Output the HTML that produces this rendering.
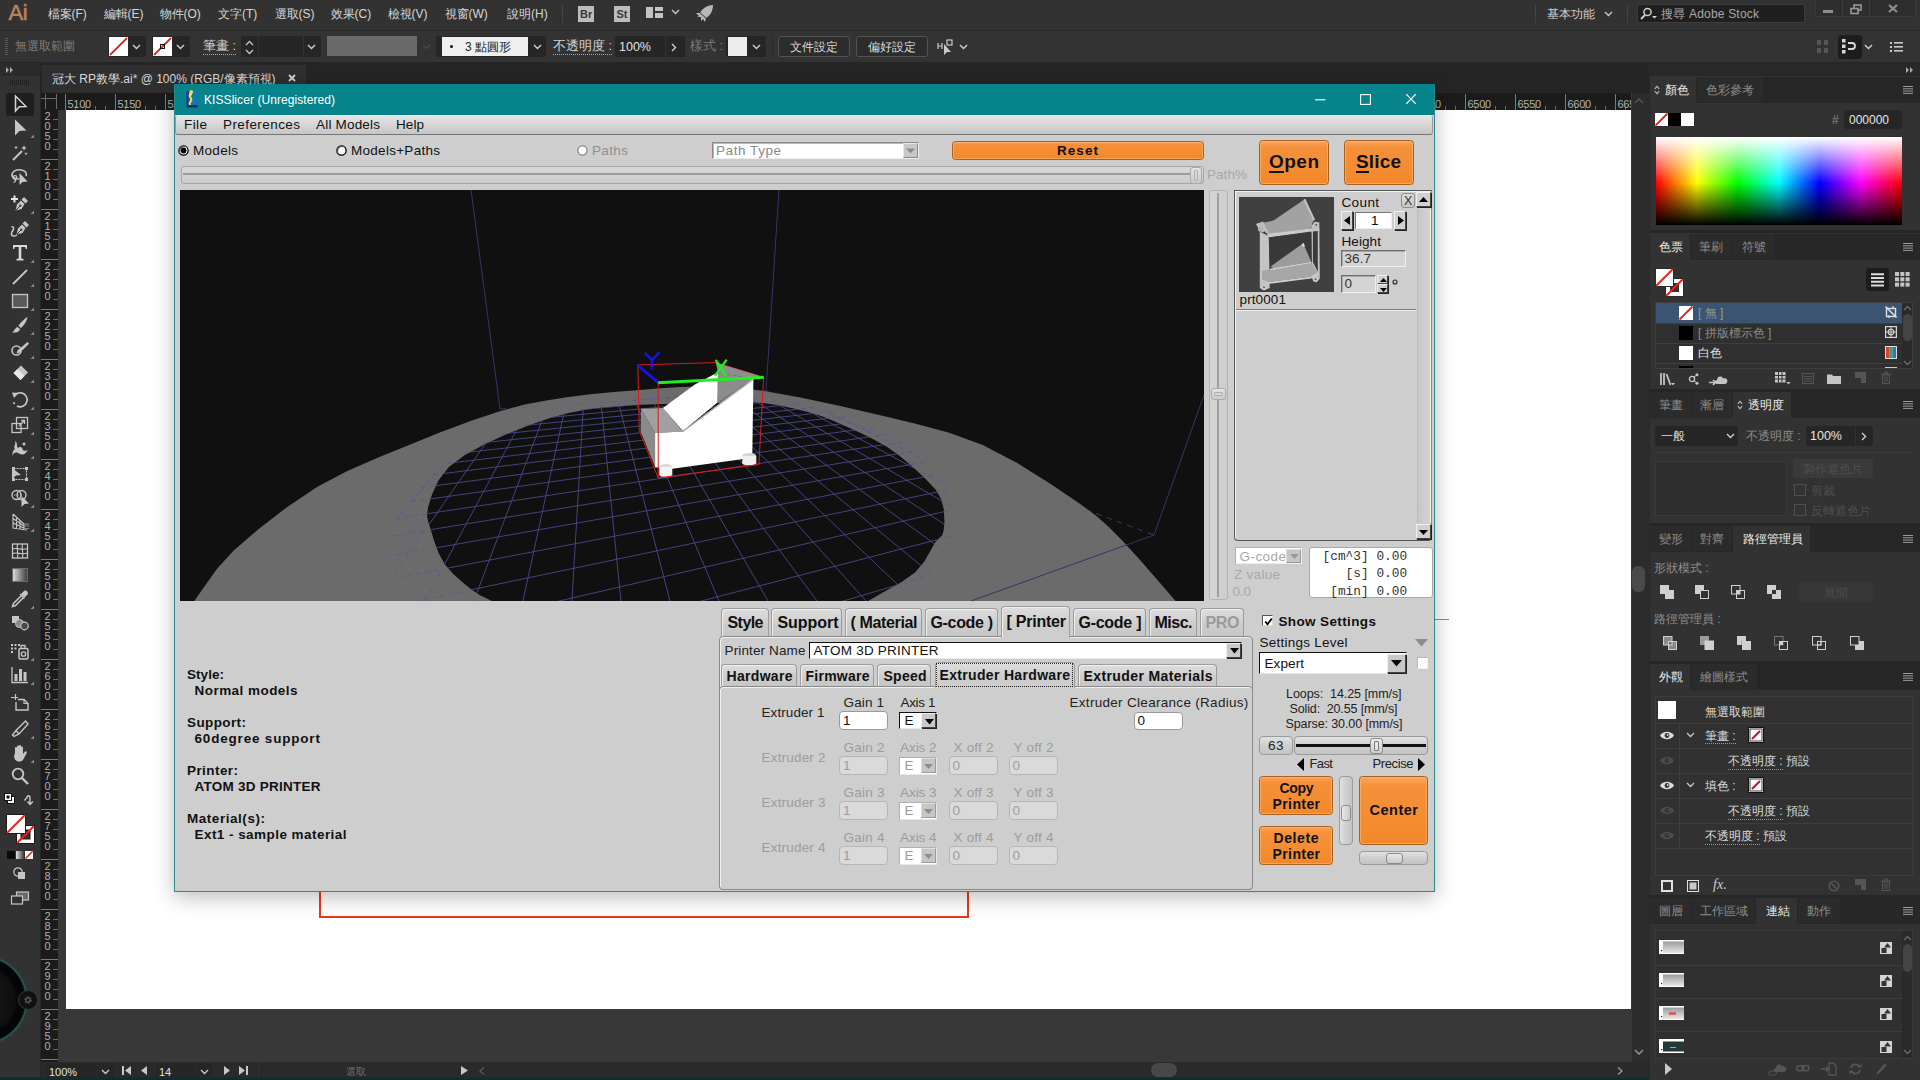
<!DOCTYPE html>
<html lang="zh-Hant">
<head>
<meta charset="utf-8">
<title>KISSlicer over Illustrator</title>
<style>
*{box-sizing:border-box;margin:0;padding:0}
html,body{width:1920px;height:1080px;overflow:hidden;background:#323232}
body{font-family:"Liberation Sans",sans-serif;font-size:12px;color:#d0d0d0;position:relative}
.a{position:absolute}
.t{position:absolute;white-space:nowrap;line-height:1}
svg{position:absolute;overflow:visible}
/* ---------- Illustrator chrome ---------- */
#menubar{left:0;top:0;width:1920px;height:29px;background:#323232}
#menubar .t{top:8px;font-size:12px;color:#d6d6d6}
#ctrlbar{left:0;top:30px;width:1920px;height:33px;background:#333333;border-top:1px solid #2a2a2a;border-bottom:1px solid #262626}
#tabstrip{left:0;top:63px;width:1920px;height:30px;background:#252525}
#doctab{left:42px;top:65px;width:264px;height:28px;background:#2f2f2f}
#tools{left:0;top:63px;width:41px;height:1017px;background:#323232;border-right:1px solid #262626}
#canvasbg{left:41px;top:93px;width:1608px;height:987px;background:#383838}
#hruler{left:58px;top:93px;width:1573px;height:17px;background:#1b1b1b;overflow:hidden}
#vruler{left:41px;top:93px;width:17px;height:972px;background:#1b1b1b;overflow:hidden}
#artboard{left:66px;top:110px;width:1564.5px;height:899px;background:#ffffff}
#statusbar{left:41px;top:1062px;width:1608px;height:18px;background:#2a2a2a}
#rightpanel{left:1649px;top:63px;width:271px;height:1017px;background:#323232}
.rt{font-size:10.5px;color:#c8c8c8;letter-spacing:0}
.rl{font-size:11px;color:#b0b0b0;letter-spacing:-0.25px}
/* ---------- KISSlicer ---------- */
#kiss{left:174px;top:85px;width:1261px;height:807px;background:#cecece;border:1px solid #2a8a8e;box-shadow:0 5px 20px rgba(0,0,0,.27)}
#kiss .t{color:#111}
</style>
</head>
<body>
<!-- ======= Illustrator top bars ======= -->
<div id="menubar" class="a">
  <div class="t" style="left:8.5px;top:1.5px;font-size:22px;color:#b5835c;letter-spacing:-0.5px;-webkit-text-stroke:0.6px #b5835c">Ai</div>
  <div class="t" style="left:47.5px">檔案(F)</div>
  <div class="t" style="left:103.5px">編輯(E)</div>
  <div class="t" style="left:159.5px">物件(O)</div>
  <div class="t" style="left:218px">文字(T)</div>
  <div class="t" style="left:274.5px">選取(S)</div>
  <div class="t" style="left:330.5px">效果(C)</div>
  <div class="t" style="left:387.5px">檢視(V)</div>
  <div class="t" style="left:444.5px">視窗(W)</div>
  <div class="t" style="left:507px">說明(H)</div>
  <div class="a" style="left:562px;top:5px;width:1px;height:18px;background:#444"></div>
  <div class="a" style="left:578px;top:6px;width:16px;height:16px;background:#bdbdbd"></div>
  <div class="t" style="left:580px;top:9px;font-size:11px;font-weight:bold;color:#3a3a3a">Br</div>
  <div class="a" style="left:614px;top:6px;width:16px;height:16px;background:#bdbdbd"></div>
  <div class="t" style="left:616.5px;top:9px;font-size:11px;font-weight:bold;color:#3a3a3a">St</div>
  <svg style="left:646px;top:7px" width="18" height="12"><rect x="0" y="0" width="7" height="11" fill="#c4c4c4"/><rect x="9" y="0" width="8" height="4" fill="#c4c4c4"/><rect x="9" y="6" width="8" height="5" fill="#c4c4c4"/></svg>
  <svg style="left:671px;top:9px" width="9" height="6"><path d="M1 1 L4.5 4.5 L8 1" fill="none" stroke="#c8c8c8" stroke-width="1.4"/></svg>
  <svg style="left:695px;top:4px" width="20" height="19"><path d="M18 1 C12 1 7 5 5 9 L1 9 L4 12 L2 13 L6 13 L6 17 L8 15 L10 18 L11 14 C15 12 18 7 18 1 Z" fill="#b8b8b8"/><path d="M5 9 L11 14" stroke="#323232" stroke-width="1"/></svg>
  <div class="a" style="left:1535px;top:5px;width:1px;height:18px;background:#444"></div>
  <div class="t" style="left:1547px;top:8px;font-size:12px;color:#cfcfcf">基本功能</div>
  <svg style="left:1604px;top:11px" width="9" height="6"><path d="M1 1 L4.5 4.5 L8 1" fill="none" stroke="#c8c8c8" stroke-width="1.4"/></svg>
  <div class="a" style="left:1627px;top:5px;width:1px;height:18px;background:#444"></div>
  <div class="a" style="left:1637px;top:4px;width:168px;height:19px;background:#1f1f1f;border:1px solid #3c3c3c;border-radius:2px"></div>
  <svg style="left:1640px;top:7px" width="18" height="13"><circle cx="7.5" cy="5" r="3.6" fill="none" stroke="#d0d0d0" stroke-width="1.5"/><path d="M5 8 L1 12" stroke="#d0d0d0" stroke-width="1.8"/><path d="M12 9 L17 9 L14.5 11.5 Z" fill="#d0d0d0"/></svg>
  <div class="t" style="left:1661px;top:8px;font-size:12px;color:#a9a9a9;letter-spacing:0.2px">搜尋 Adobe Stock</div>
  <div class="a" style="left:1815px;top:0;width:101px;height:17px;background:#2e2e2e;border:1px solid #3a3a3a;border-top:0;border-radius:0 0 2px 2px"></div>
  <div class="a" style="left:1842px;top:0;width:1px;height:16px;background:#3e3e3e"></div>
  <div class="a" style="left:1869px;top:0;width:1px;height:16px;background:#3e3e3e"></div>
  <div class="a" style="left:1823px;top:10px;width:10px;height:3px;background:#8f8f8f"></div>
  <svg style="left:1850px;top:4px" width="13" height="11"><rect x="4" y="1" width="7" height="5" fill="none" stroke="#9a9a9a" stroke-width="1.6"/><rect x="1" y="4.5" width="7" height="5" fill="#2e2e2e" stroke="#9a9a9a" stroke-width="1.6"/></svg>
  <svg style="left:1888px;top:4px" width="11" height="9"><path d="M1 1 L9 8 M9 1 L1 8" stroke="#8f8f8f" stroke-width="2.2"/></svg>
</div>
<div id="ctrlbar" class="a">
  <div class="a" style="left:5px;top:7px;width:3px;height:18px;background:repeating-linear-gradient(#555 0 1px,transparent 1px 2px)"></div>
  <div class="t" style="left:15px;top:9px;font-size:12px;color:#7d7d7d">無選取範圍</div>
  <!-- fill swatch -->
  <div class="a" style="left:108px;top:5px;width:38px;height:21px;background:#262626;border-radius:2px"></div>
  <svg style="left:109px;top:6px" width="19" height="19"><rect width="19" height="19" fill="#fff"/><path d="M1 18 L18 1" stroke="#e0261c" stroke-width="1.8"/></svg>
  <svg style="left:132px;top:13px" width="9" height="6"><path d="M1 1 L4.5 4.5 L8 1" fill="none" stroke="#d0d0d0" stroke-width="1.4"/></svg>
  <!-- stroke swatch -->
  <div class="a" style="left:152px;top:5px;width:38px;height:21px;background:#262626;border-radius:2px"></div>
  <svg style="left:153px;top:6px" width="19" height="19"><rect width="19" height="19" fill="#fff"/><path d="M1 18 L18 1" stroke="#e0261c" stroke-width="1.8"/><rect x="7.5" y="7.5" width="4" height="4" fill="none" stroke="#111" stroke-width="1"/></svg>
  <svg style="left:176px;top:13px" width="9" height="6"><path d="M1 1 L4.5 4.5 L8 1" fill="none" stroke="#d0d0d0" stroke-width="1.4"/></svg>
  <div class="t" style="left:203px;top:9px;font-size:12.5px;color:#d4d4d4;border-bottom:1px dotted #aaa;padding-bottom:1px">筆畫 :</div>
  <div class="a" style="left:241px;top:5px;width:80px;height:21px;background:#262626;border-radius:2px"></div>
  <div class="a" style="left:258px;top:5px;width:1px;height:21px;background:#323232"></div>
  <div class="a" style="left:303px;top:5px;width:1px;height:21px;background:#323232"></div>
  <svg style="left:245px;top:9px" width="9" height="15"><path d="M1 5 L4.5 1.5 L8 5 M1 10 L4.5 13.5 L8 10" fill="none" stroke="#c8c8c8" stroke-width="1.3"/></svg>
  <svg style="left:307px;top:13px" width="9" height="6"><path d="M1 1 L4.5 4.5 L8 1" fill="none" stroke="#d0d0d0" stroke-width="1.4"/></svg>
  <div class="a" style="left:327px;top:5px;width:90px;height:20px;background:#6a6a6a"></div>
  <svg style="left:422px;top:13px" width="9" height="6"><path d="M1 1 L4.5 4.5 L8 1" fill="none" stroke="#484848" stroke-width="1.4"/></svg>
  <div class="a" style="left:436px;top:5px;width:110px;height:21px;background:#262626;border-radius:2px"></div>
  <div class="a" style="left:442px;top:6px;width:86px;height:19px;background:#efefef"></div>
  <div class="a" style="left:450px;top:14px;width:3px;height:3px;border-radius:2px;background:#111"></div>
  <div class="t" style="left:465px;top:10px;font-size:12px;color:#222">3 點圓形</div>
  <svg style="left:533px;top:13px" width="9" height="6"><path d="M1 1 L4.5 4.5 L8 1" fill="none" stroke="#d0d0d0" stroke-width="1.4"/></svg>
  <div class="t" style="left:553px;top:9px;font-size:12.5px;color:#d4d4d4;border-bottom:1px dotted #aaa;padding-bottom:1px">不透明度 :</div>
  <div class="a" style="left:615px;top:5px;width:70px;height:21px;background:#262626;border-radius:2px"></div>
  <div class="a" style="left:665px;top:5px;width:1px;height:21px;background:#323232"></div>
  <div class="t" style="left:619px;top:10px;font-size:12.5px;color:#e0e0e0">100%</div>
  <svg style="left:671px;top:12px" width="6" height="9"><path d="M1 1 L4.5 4.5 L1 8" fill="none" stroke="#d0d0d0" stroke-width="1.4"/></svg>
  <div class="t" style="left:690px;top:9px;font-size:12.5px;color:#7d7d7d">樣式 :</div>
  <div class="a" style="left:726px;top:5px;width:40px;height:21px;background:#262626;border-radius:2px"></div>
  <div class="a" style="left:728px;top:6px;width:19px;height:19px;background:#ececec"></div>
  <svg style="left:752px;top:13px" width="9" height="6"><path d="M1 1 L4.5 4.5 L8 1" fill="none" stroke="#d0d0d0" stroke-width="1.4"/></svg>
  <div class="a" style="left:772px;top:4px;width:1px;height:24px;background:#2a2a2a"></div>
  <div class="a" style="left:778px;top:5px;width:72px;height:21px;background:#2c2c2c;border:1px solid #525252;border-radius:3px"></div>
  <div class="t" style="left:790px;top:10px;font-size:12px;color:#dadada">文件設定</div>
  <div class="a" style="left:856px;top:5px;width:72px;height:21px;background:#2c2c2c;border:1px solid #525252;border-radius:3px"></div>
  <div class="t" style="left:868px;top:10px;font-size:12px;color:#dadada">偏好設定</div>
  <svg style="left:937px;top:8px" width="18" height="17"><path d="M1 4 L1 10 M1 7 L5 7 M5 4 L5 10" stroke="#c8c8c8" stroke-width="1.2" fill="none"/><rect x="10" y="1" width="5" height="5" fill="none" stroke="#c8c8c8" stroke-width="1.2"/><path d="M7 5 L7 16 L10 13 L14 13 Z" fill="#c8c8c8"/></svg>
  <svg style="left:959px;top:13px" width="9" height="6"><path d="M1 1 L4.5 4.5 L8 1" fill="none" stroke="#d0d0d0" stroke-width="1.4"/></svg>
  <!-- right icons -->
  <svg style="left:1817px;top:9px" width="13" height="14"><g fill="#555"><rect x="0" y="0" width="4" height="5"/><rect x="7" y="0" width="4" height="5"/><rect x="0" y="8" width="4" height="5"/><rect x="7" y="8" width="4" height="5"/></g></svg>
  <div class="a" style="left:1838px;top:4px;width:24px;height:24px;background:#1d1d1d;border-radius:3px"></div>
  <svg style="left:1842px;top:8px" width="16" height="15"><g fill="#d8d8d8"><rect x="0" y="0" width="3.5" height="3.5"/><rect x="0" y="5.5" width="3.5" height="3.5"/><rect x="0" y="11" width="3.5" height="3.5"/></g><path d="M6 4 L10 4 C14 4 14 10 10 10 L6 10" fill="none" stroke="#d8d8d8" stroke-width="1.8"/></svg>
  <svg style="left:1864px;top:13px" width="9" height="6"><path d="M1 1 L4.5 4.5 L8 1" fill="none" stroke="#d0d0d0" stroke-width="1.4"/></svg>
  <svg style="left:1890px;top:11px" width="13" height="10"><g fill="#c8c8c8"><rect x="0" y="0" width="2" height="2"/><rect x="0" y="4" width="2" height="2"/><rect x="0" y="8" width="2" height="2"/><rect x="4" y="0" width="9" height="1.6"/><rect x="4" y="4" width="9" height="1.6"/><rect x="4" y="8" width="9" height="1.6"/></g></svg>
</div>
<div id="tabstrip" class="a"></div>
<div id="doctab" class="a">
  <div class="t" style="left:10px;top:8px;font-size:12px;color:#d8d8d8">冠大 RP教學.ai* @ 100% (RGB/像素預視)</div>
  <svg style="left:246px;top:9px" width="8" height="8"><path d="M1 1 L7 7 M7 1 L1 7" stroke="#d0d0d0" stroke-width="1.8"/></svg>
</div>
<!-- ======= canvas, rulers ======= -->
<div id="canvasbg" class="a"></div>
<div id="artboard" class="a"></div>
<div class="a" style="left:319px;top:880px;width:650px;height:38px;border:2px solid #e8391d;border-top:0"></div>
<div class="a" style="left:1435px;top:619px;width:14px;height:1px;background:#888"></div>
<div id="hruler" class="a">
<svg style="left:0;top:0" width="1574" height="17"><path d="M7.5 1 V17" stroke="#7a7a7a" stroke-width="1"/><path d="M17.5 13 V17" stroke="#6a6a6a" stroke-width="1"/><path d="M27.5 13 V17" stroke="#6a6a6a" stroke-width="1"/><path d="M37.5 13 V17" stroke="#6a6a6a" stroke-width="1"/><path d="M47.5 13 V17" stroke="#6a6a6a" stroke-width="1"/><path d="M57.5 1 V17" stroke="#7a7a7a" stroke-width="1"/><path d="M67.5 13 V17" stroke="#6a6a6a" stroke-width="1"/><path d="M77.5 13 V17" stroke="#6a6a6a" stroke-width="1"/><path d="M87.5 13 V17" stroke="#6a6a6a" stroke-width="1"/><path d="M97.5 13 V17" stroke="#6a6a6a" stroke-width="1"/><path d="M107.5 1 V17" stroke="#7a7a7a" stroke-width="1"/><path d="M117.5 13 V17" stroke="#6a6a6a" stroke-width="1"/><path d="M127.5 13 V17" stroke="#6a6a6a" stroke-width="1"/><path d="M137.5 13 V17" stroke="#6a6a6a" stroke-width="1"/><path d="M147.5 13 V17" stroke="#6a6a6a" stroke-width="1"/><path d="M157.5 1 V17" stroke="#7a7a7a" stroke-width="1"/><path d="M167.5 13 V17" stroke="#6a6a6a" stroke-width="1"/><path d="M177.5 13 V17" stroke="#6a6a6a" stroke-width="1"/><path d="M187.5 13 V17" stroke="#6a6a6a" stroke-width="1"/><path d="M197.5 13 V17" stroke="#6a6a6a" stroke-width="1"/><path d="M207.5 1 V17" stroke="#7a7a7a" stroke-width="1"/><path d="M217.5 13 V17" stroke="#6a6a6a" stroke-width="1"/><path d="M227.5 13 V17" stroke="#6a6a6a" stroke-width="1"/><path d="M237.5 13 V17" stroke="#6a6a6a" stroke-width="1"/><path d="M247.5 13 V17" stroke="#6a6a6a" stroke-width="1"/><path d="M257.5 1 V17" stroke="#7a7a7a" stroke-width="1"/><path d="M267.5 13 V17" stroke="#6a6a6a" stroke-width="1"/><path d="M277.5 13 V17" stroke="#6a6a6a" stroke-width="1"/><path d="M287.5 13 V17" stroke="#6a6a6a" stroke-width="1"/><path d="M297.5 13 V17" stroke="#6a6a6a" stroke-width="1"/><path d="M307.5 1 V17" stroke="#7a7a7a" stroke-width="1"/><path d="M317.5 13 V17" stroke="#6a6a6a" stroke-width="1"/><path d="M327.5 13 V17" stroke="#6a6a6a" stroke-width="1"/><path d="M337.5 13 V17" stroke="#6a6a6a" stroke-width="1"/><path d="M347.5 13 V17" stroke="#6a6a6a" stroke-width="1"/><path d="M357.5 1 V17" stroke="#7a7a7a" stroke-width="1"/><path d="M367.5 13 V17" stroke="#6a6a6a" stroke-width="1"/><path d="M377.5 13 V17" stroke="#6a6a6a" stroke-width="1"/><path d="M387.5 13 V17" stroke="#6a6a6a" stroke-width="1"/><path d="M397.5 13 V17" stroke="#6a6a6a" stroke-width="1"/><path d="M407.5 1 V17" stroke="#7a7a7a" stroke-width="1"/><path d="M417.5 13 V17" stroke="#6a6a6a" stroke-width="1"/><path d="M427.5 13 V17" stroke="#6a6a6a" stroke-width="1"/><path d="M437.5 13 V17" stroke="#6a6a6a" stroke-width="1"/><path d="M447.5 13 V17" stroke="#6a6a6a" stroke-width="1"/><path d="M457.5 1 V17" stroke="#7a7a7a" stroke-width="1"/><path d="M467.5 13 V17" stroke="#6a6a6a" stroke-width="1"/><path d="M477.5 13 V17" stroke="#6a6a6a" stroke-width="1"/><path d="M487.5 13 V17" stroke="#6a6a6a" stroke-width="1"/><path d="M497.5 13 V17" stroke="#6a6a6a" stroke-width="1"/><path d="M507.5 1 V17" stroke="#7a7a7a" stroke-width="1"/><path d="M517.5 13 V17" stroke="#6a6a6a" stroke-width="1"/><path d="M527.5 13 V17" stroke="#6a6a6a" stroke-width="1"/><path d="M537.5 13 V17" stroke="#6a6a6a" stroke-width="1"/><path d="M547.5 13 V17" stroke="#6a6a6a" stroke-width="1"/><path d="M557.5 1 V17" stroke="#7a7a7a" stroke-width="1"/><path d="M567.5 13 V17" stroke="#6a6a6a" stroke-width="1"/><path d="M577.5 13 V17" stroke="#6a6a6a" stroke-width="1"/><path d="M587.5 13 V17" stroke="#6a6a6a" stroke-width="1"/><path d="M597.5 13 V17" stroke="#6a6a6a" stroke-width="1"/><path d="M607.5 1 V17" stroke="#7a7a7a" stroke-width="1"/><path d="M617.5 13 V17" stroke="#6a6a6a" stroke-width="1"/><path d="M627.5 13 V17" stroke="#6a6a6a" stroke-width="1"/><path d="M637.5 13 V17" stroke="#6a6a6a" stroke-width="1"/><path d="M647.5 13 V17" stroke="#6a6a6a" stroke-width="1"/><path d="M657.5 1 V17" stroke="#7a7a7a" stroke-width="1"/><path d="M667.5 13 V17" stroke="#6a6a6a" stroke-width="1"/><path d="M677.5 13 V17" stroke="#6a6a6a" stroke-width="1"/><path d="M687.5 13 V17" stroke="#6a6a6a" stroke-width="1"/><path d="M697.5 13 V17" stroke="#6a6a6a" stroke-width="1"/><path d="M707.5 1 V17" stroke="#7a7a7a" stroke-width="1"/><path d="M717.5 13 V17" stroke="#6a6a6a" stroke-width="1"/><path d="M727.5 13 V17" stroke="#6a6a6a" stroke-width="1"/><path d="M737.5 13 V17" stroke="#6a6a6a" stroke-width="1"/><path d="M747.5 13 V17" stroke="#6a6a6a" stroke-width="1"/><path d="M757.5 1 V17" stroke="#7a7a7a" stroke-width="1"/><path d="M767.5 13 V17" stroke="#6a6a6a" stroke-width="1"/><path d="M777.5 13 V17" stroke="#6a6a6a" stroke-width="1"/><path d="M787.5 13 V17" stroke="#6a6a6a" stroke-width="1"/><path d="M797.5 13 V17" stroke="#6a6a6a" stroke-width="1"/><path d="M807.5 1 V17" stroke="#7a7a7a" stroke-width="1"/><path d="M817.5 13 V17" stroke="#6a6a6a" stroke-width="1"/><path d="M827.5 13 V17" stroke="#6a6a6a" stroke-width="1"/><path d="M837.5 13 V17" stroke="#6a6a6a" stroke-width="1"/><path d="M847.5 13 V17" stroke="#6a6a6a" stroke-width="1"/><path d="M857.5 1 V17" stroke="#7a7a7a" stroke-width="1"/><path d="M867.5 13 V17" stroke="#6a6a6a" stroke-width="1"/><path d="M877.5 13 V17" stroke="#6a6a6a" stroke-width="1"/><path d="M887.5 13 V17" stroke="#6a6a6a" stroke-width="1"/><path d="M897.5 13 V17" stroke="#6a6a6a" stroke-width="1"/><path d="M907.5 1 V17" stroke="#7a7a7a" stroke-width="1"/><path d="M917.5 13 V17" stroke="#6a6a6a" stroke-width="1"/><path d="M927.5 13 V17" stroke="#6a6a6a" stroke-width="1"/><path d="M937.5 13 V17" stroke="#6a6a6a" stroke-width="1"/><path d="M947.5 13 V17" stroke="#6a6a6a" stroke-width="1"/><path d="M957.5 1 V17" stroke="#7a7a7a" stroke-width="1"/><path d="M967.5 13 V17" stroke="#6a6a6a" stroke-width="1"/><path d="M977.5 13 V17" stroke="#6a6a6a" stroke-width="1"/><path d="M987.5 13 V17" stroke="#6a6a6a" stroke-width="1"/><path d="M997.5 13 V17" stroke="#6a6a6a" stroke-width="1"/><path d="M1007.5 1 V17" stroke="#7a7a7a" stroke-width="1"/><path d="M1017.5 13 V17" stroke="#6a6a6a" stroke-width="1"/><path d="M1027.5 13 V17" stroke="#6a6a6a" stroke-width="1"/><path d="M1037.5 13 V17" stroke="#6a6a6a" stroke-width="1"/><path d="M1047.5 13 V17" stroke="#6a6a6a" stroke-width="1"/><path d="M1057.5 1 V17" stroke="#7a7a7a" stroke-width="1"/><path d="M1067.5 13 V17" stroke="#6a6a6a" stroke-width="1"/><path d="M1077.5 13 V17" stroke="#6a6a6a" stroke-width="1"/><path d="M1087.5 13 V17" stroke="#6a6a6a" stroke-width="1"/><path d="M1097.5 13 V17" stroke="#6a6a6a" stroke-width="1"/><path d="M1107.5 1 V17" stroke="#7a7a7a" stroke-width="1"/><path d="M1117.5 13 V17" stroke="#6a6a6a" stroke-width="1"/><path d="M1127.5 13 V17" stroke="#6a6a6a" stroke-width="1"/><path d="M1137.5 13 V17" stroke="#6a6a6a" stroke-width="1"/><path d="M1147.5 13 V17" stroke="#6a6a6a" stroke-width="1"/><path d="M1157.5 1 V17" stroke="#7a7a7a" stroke-width="1"/><path d="M1167.5 13 V17" stroke="#6a6a6a" stroke-width="1"/><path d="M1177.5 13 V17" stroke="#6a6a6a" stroke-width="1"/><path d="M1187.5 13 V17" stroke="#6a6a6a" stroke-width="1"/><path d="M1197.5 13 V17" stroke="#6a6a6a" stroke-width="1"/><path d="M1207.5 1 V17" stroke="#7a7a7a" stroke-width="1"/><path d="M1217.5 13 V17" stroke="#6a6a6a" stroke-width="1"/><path d="M1227.5 13 V17" stroke="#6a6a6a" stroke-width="1"/><path d="M1237.5 13 V17" stroke="#6a6a6a" stroke-width="1"/><path d="M1247.5 13 V17" stroke="#6a6a6a" stroke-width="1"/><path d="M1257.5 1 V17" stroke="#7a7a7a" stroke-width="1"/><path d="M1267.5 13 V17" stroke="#6a6a6a" stroke-width="1"/><path d="M1277.5 13 V17" stroke="#6a6a6a" stroke-width="1"/><path d="M1287.5 13 V17" stroke="#6a6a6a" stroke-width="1"/><path d="M1297.5 13 V17" stroke="#6a6a6a" stroke-width="1"/><path d="M1307.5 1 V17" stroke="#7a7a7a" stroke-width="1"/><path d="M1317.5 13 V17" stroke="#6a6a6a" stroke-width="1"/><path d="M1327.5 13 V17" stroke="#6a6a6a" stroke-width="1"/><path d="M1337.5 13 V17" stroke="#6a6a6a" stroke-width="1"/><path d="M1347.5 13 V17" stroke="#6a6a6a" stroke-width="1"/><path d="M1357.5 1 V17" stroke="#7a7a7a" stroke-width="1"/><path d="M1367.5 13 V17" stroke="#6a6a6a" stroke-width="1"/><path d="M1377.5 13 V17" stroke="#6a6a6a" stroke-width="1"/><path d="M1387.5 13 V17" stroke="#6a6a6a" stroke-width="1"/><path d="M1397.5 13 V17" stroke="#6a6a6a" stroke-width="1"/><path d="M1407.5 1 V17" stroke="#7a7a7a" stroke-width="1"/><path d="M1417.5 13 V17" stroke="#6a6a6a" stroke-width="1"/><path d="M1427.5 13 V17" stroke="#6a6a6a" stroke-width="1"/><path d="M1437.5 13 V17" stroke="#6a6a6a" stroke-width="1"/><path d="M1447.5 13 V17" stroke="#6a6a6a" stroke-width="1"/><path d="M1457.5 1 V17" stroke="#7a7a7a" stroke-width="1"/><path d="M1467.5 13 V17" stroke="#6a6a6a" stroke-width="1"/><path d="M1477.5 13 V17" stroke="#6a6a6a" stroke-width="1"/><path d="M1487.5 13 V17" stroke="#6a6a6a" stroke-width="1"/><path d="M1497.5 13 V17" stroke="#6a6a6a" stroke-width="1"/><path d="M1507.5 1 V17" stroke="#7a7a7a" stroke-width="1"/><path d="M1517.5 13 V17" stroke="#6a6a6a" stroke-width="1"/><path d="M1527.5 13 V17" stroke="#6a6a6a" stroke-width="1"/><path d="M1537.5 13 V17" stroke="#6a6a6a" stroke-width="1"/><path d="M1547.5 13 V17" stroke="#6a6a6a" stroke-width="1"/><path d="M1557.5 1 V17" stroke="#7a7a7a" stroke-width="1"/><path d="M1567.5 13 V17" stroke="#6a6a6a" stroke-width="1"/></svg>
<div class="t rl" style="left:9.5px;top:5.5px">5100</div>
<div class="t rl" style="left:59.5px;top:5.5px">5150</div>
<div class="t rl" style="left:109.5px;top:5.5px">5200</div>
<div class="t rl" style="left:159.5px;top:5.5px">5250</div>
<div class="t rl" style="left:209.5px;top:5.5px">5300</div>
<div class="t rl" style="left:259.5px;top:5.5px">5350</div>
<div class="t rl" style="left:309.5px;top:5.5px">5400</div>
<div class="t rl" style="left:359.5px;top:5.5px">5450</div>
<div class="t rl" style="left:409.5px;top:5.5px">5500</div>
<div class="t rl" style="left:459.5px;top:5.5px">5550</div>
<div class="t rl" style="left:509.5px;top:5.5px">5600</div>
<div class="t rl" style="left:559.5px;top:5.5px">5650</div>
<div class="t rl" style="left:609.5px;top:5.5px">5700</div>
<div class="t rl" style="left:659.5px;top:5.5px">5750</div>
<div class="t rl" style="left:709.5px;top:5.5px">5800</div>
<div class="t rl" style="left:759.5px;top:5.5px">5850</div>
<div class="t rl" style="left:809.5px;top:5.5px">5900</div>
<div class="t rl" style="left:859.5px;top:5.5px">5950</div>
<div class="t rl" style="left:909.5px;top:5.5px">6000</div>
<div class="t rl" style="left:959.5px;top:5.5px">6050</div>
<div class="t rl" style="left:1009.5px;top:5.5px">6100</div>
<div class="t rl" style="left:1059.5px;top:5.5px">6150</div>
<div class="t rl" style="left:1109.5px;top:5.5px">6200</div>
<div class="t rl" style="left:1159.5px;top:5.5px">6250</div>
<div class="t rl" style="left:1209.5px;top:5.5px">6300</div>
<div class="t rl" style="left:1259.5px;top:5.5px">6350</div>
<div class="t rl" style="left:1309.5px;top:5.5px">6400</div>
<div class="t rl" style="left:1359.5px;top:5.5px">6450</div>
<div class="t rl" style="left:1409.5px;top:5.5px">6500</div>
<div class="t rl" style="left:1459.5px;top:5.5px">6550</div>
<div class="t rl" style="left:1509.5px;top:5.5px">6600</div>
<div class="t rl" style="left:1559.5px;top:5.5px">6650</div>
</div>
<div id="vruler" class="a">
<svg style="left:-1px;top:0" width="18" height="972"><path d="M1 16.5 H18" stroke="#7a7a7a" stroke-width="1"/><path d="M13 26.5 H18" stroke="#6a6a6a" stroke-width="1"/><path d="M13 36.5 H18" stroke="#6a6a6a" stroke-width="1"/><path d="M13 46.5 H18" stroke="#6a6a6a" stroke-width="1"/><path d="M13 56.5 H18" stroke="#6a6a6a" stroke-width="1"/><path d="M1 66.5 H18" stroke="#7a7a7a" stroke-width="1"/><path d="M13 76.5 H18" stroke="#6a6a6a" stroke-width="1"/><path d="M13 86.5 H18" stroke="#6a6a6a" stroke-width="1"/><path d="M13 96.5 H18" stroke="#6a6a6a" stroke-width="1"/><path d="M13 106.5 H18" stroke="#6a6a6a" stroke-width="1"/><path d="M1 116.5 H18" stroke="#7a7a7a" stroke-width="1"/><path d="M13 126.5 H18" stroke="#6a6a6a" stroke-width="1"/><path d="M13 136.5 H18" stroke="#6a6a6a" stroke-width="1"/><path d="M13 146.5 H18" stroke="#6a6a6a" stroke-width="1"/><path d="M13 156.5 H18" stroke="#6a6a6a" stroke-width="1"/><path d="M1 166.5 H18" stroke="#7a7a7a" stroke-width="1"/><path d="M13 176.5 H18" stroke="#6a6a6a" stroke-width="1"/><path d="M13 186.5 H18" stroke="#6a6a6a" stroke-width="1"/><path d="M13 196.5 H18" stroke="#6a6a6a" stroke-width="1"/><path d="M13 206.5 H18" stroke="#6a6a6a" stroke-width="1"/><path d="M1 216.5 H18" stroke="#7a7a7a" stroke-width="1"/><path d="M13 226.5 H18" stroke="#6a6a6a" stroke-width="1"/><path d="M13 236.5 H18" stroke="#6a6a6a" stroke-width="1"/><path d="M13 246.5 H18" stroke="#6a6a6a" stroke-width="1"/><path d="M13 256.5 H18" stroke="#6a6a6a" stroke-width="1"/><path d="M1 266.5 H18" stroke="#7a7a7a" stroke-width="1"/><path d="M13 276.5 H18" stroke="#6a6a6a" stroke-width="1"/><path d="M13 286.5 H18" stroke="#6a6a6a" stroke-width="1"/><path d="M13 296.5 H18" stroke="#6a6a6a" stroke-width="1"/><path d="M13 306.5 H18" stroke="#6a6a6a" stroke-width="1"/><path d="M1 316.5 H18" stroke="#7a7a7a" stroke-width="1"/><path d="M13 326.5 H18" stroke="#6a6a6a" stroke-width="1"/><path d="M13 336.5 H18" stroke="#6a6a6a" stroke-width="1"/><path d="M13 346.5 H18" stroke="#6a6a6a" stroke-width="1"/><path d="M13 356.5 H18" stroke="#6a6a6a" stroke-width="1"/><path d="M1 366.5 H18" stroke="#7a7a7a" stroke-width="1"/><path d="M13 376.5 H18" stroke="#6a6a6a" stroke-width="1"/><path d="M13 386.5 H18" stroke="#6a6a6a" stroke-width="1"/><path d="M13 396.5 H18" stroke="#6a6a6a" stroke-width="1"/><path d="M13 406.5 H18" stroke="#6a6a6a" stroke-width="1"/><path d="M1 416.5 H18" stroke="#7a7a7a" stroke-width="1"/><path d="M13 426.5 H18" stroke="#6a6a6a" stroke-width="1"/><path d="M13 436.5 H18" stroke="#6a6a6a" stroke-width="1"/><path d="M13 446.5 H18" stroke="#6a6a6a" stroke-width="1"/><path d="M13 456.5 H18" stroke="#6a6a6a" stroke-width="1"/><path d="M1 466.5 H18" stroke="#7a7a7a" stroke-width="1"/><path d="M13 476.5 H18" stroke="#6a6a6a" stroke-width="1"/><path d="M13 486.5 H18" stroke="#6a6a6a" stroke-width="1"/><path d="M13 496.5 H18" stroke="#6a6a6a" stroke-width="1"/><path d="M13 506.5 H18" stroke="#6a6a6a" stroke-width="1"/><path d="M1 516.5 H18" stroke="#7a7a7a" stroke-width="1"/><path d="M13 526.5 H18" stroke="#6a6a6a" stroke-width="1"/><path d="M13 536.5 H18" stroke="#6a6a6a" stroke-width="1"/><path d="M13 546.5 H18" stroke="#6a6a6a" stroke-width="1"/><path d="M13 556.5 H18" stroke="#6a6a6a" stroke-width="1"/><path d="M1 566.5 H18" stroke="#7a7a7a" stroke-width="1"/><path d="M13 576.5 H18" stroke="#6a6a6a" stroke-width="1"/><path d="M13 586.5 H18" stroke="#6a6a6a" stroke-width="1"/><path d="M13 596.5 H18" stroke="#6a6a6a" stroke-width="1"/><path d="M13 606.5 H18" stroke="#6a6a6a" stroke-width="1"/><path d="M1 616.5 H18" stroke="#7a7a7a" stroke-width="1"/><path d="M13 626.5 H18" stroke="#6a6a6a" stroke-width="1"/><path d="M13 636.5 H18" stroke="#6a6a6a" stroke-width="1"/><path d="M13 646.5 H18" stroke="#6a6a6a" stroke-width="1"/><path d="M13 656.5 H18" stroke="#6a6a6a" stroke-width="1"/><path d="M1 666.5 H18" stroke="#7a7a7a" stroke-width="1"/><path d="M13 676.5 H18" stroke="#6a6a6a" stroke-width="1"/><path d="M13 686.5 H18" stroke="#6a6a6a" stroke-width="1"/><path d="M13 696.5 H18" stroke="#6a6a6a" stroke-width="1"/><path d="M13 706.5 H18" stroke="#6a6a6a" stroke-width="1"/><path d="M1 716.5 H18" stroke="#7a7a7a" stroke-width="1"/><path d="M13 726.5 H18" stroke="#6a6a6a" stroke-width="1"/><path d="M13 736.5 H18" stroke="#6a6a6a" stroke-width="1"/><path d="M13 746.5 H18" stroke="#6a6a6a" stroke-width="1"/><path d="M13 756.5 H18" stroke="#6a6a6a" stroke-width="1"/><path d="M1 766.5 H18" stroke="#7a7a7a" stroke-width="1"/><path d="M13 776.5 H18" stroke="#6a6a6a" stroke-width="1"/><path d="M13 786.5 H18" stroke="#6a6a6a" stroke-width="1"/><path d="M13 796.5 H18" stroke="#6a6a6a" stroke-width="1"/><path d="M13 806.5 H18" stroke="#6a6a6a" stroke-width="1"/><path d="M1 816.5 H18" stroke="#7a7a7a" stroke-width="1"/><path d="M13 826.5 H18" stroke="#6a6a6a" stroke-width="1"/><path d="M13 836.5 H18" stroke="#6a6a6a" stroke-width="1"/><path d="M13 846.5 H18" stroke="#6a6a6a" stroke-width="1"/><path d="M13 856.5 H18" stroke="#6a6a6a" stroke-width="1"/><path d="M1 866.5 H18" stroke="#7a7a7a" stroke-width="1"/><path d="M13 876.5 H18" stroke="#6a6a6a" stroke-width="1"/><path d="M13 886.5 H18" stroke="#6a6a6a" stroke-width="1"/><path d="M13 896.5 H18" stroke="#6a6a6a" stroke-width="1"/><path d="M13 906.5 H18" stroke="#6a6a6a" stroke-width="1"/><path d="M1 916.5 H18" stroke="#7a7a7a" stroke-width="1"/><path d="M13 926.5 H18" stroke="#6a6a6a" stroke-width="1"/><path d="M13 936.5 H18" stroke="#6a6a6a" stroke-width="1"/><path d="M13 946.5 H18" stroke="#6a6a6a" stroke-width="1"/><path d="M13 956.5 H18" stroke="#6a6a6a" stroke-width="1"/><path d="M1 966.5 H18" stroke="#7a7a7a" stroke-width="1"/></svg>
<div class="t rl" style="left:2.5px;top:18px;width:8px;text-align:center">2</div>
<div class="t rl" style="left:2.5px;top:28px;width:8px;text-align:center">0</div>
<div class="t rl" style="left:2.5px;top:38px;width:8px;text-align:center">5</div>
<div class="t rl" style="left:2.5px;top:48px;width:8px;text-align:center">0</div>
<div class="t rl" style="left:2.5px;top:68px;width:8px;text-align:center">2</div>
<div class="t rl" style="left:2.5px;top:78px;width:8px;text-align:center">1</div>
<div class="t rl" style="left:2.5px;top:88px;width:8px;text-align:center">0</div>
<div class="t rl" style="left:2.5px;top:98px;width:8px;text-align:center">0</div>
<div class="t rl" style="left:2.5px;top:118px;width:8px;text-align:center">2</div>
<div class="t rl" style="left:2.5px;top:128px;width:8px;text-align:center">1</div>
<div class="t rl" style="left:2.5px;top:138px;width:8px;text-align:center">5</div>
<div class="t rl" style="left:2.5px;top:148px;width:8px;text-align:center">0</div>
<div class="t rl" style="left:2.5px;top:168px;width:8px;text-align:center">2</div>
<div class="t rl" style="left:2.5px;top:178px;width:8px;text-align:center">2</div>
<div class="t rl" style="left:2.5px;top:188px;width:8px;text-align:center">0</div>
<div class="t rl" style="left:2.5px;top:198px;width:8px;text-align:center">0</div>
<div class="t rl" style="left:2.5px;top:218px;width:8px;text-align:center">2</div>
<div class="t rl" style="left:2.5px;top:228px;width:8px;text-align:center">2</div>
<div class="t rl" style="left:2.5px;top:238px;width:8px;text-align:center">5</div>
<div class="t rl" style="left:2.5px;top:248px;width:8px;text-align:center">0</div>
<div class="t rl" style="left:2.5px;top:268px;width:8px;text-align:center">2</div>
<div class="t rl" style="left:2.5px;top:278px;width:8px;text-align:center">3</div>
<div class="t rl" style="left:2.5px;top:288px;width:8px;text-align:center">0</div>
<div class="t rl" style="left:2.5px;top:298px;width:8px;text-align:center">0</div>
<div class="t rl" style="left:2.5px;top:318px;width:8px;text-align:center">2</div>
<div class="t rl" style="left:2.5px;top:328px;width:8px;text-align:center">3</div>
<div class="t rl" style="left:2.5px;top:338px;width:8px;text-align:center">5</div>
<div class="t rl" style="left:2.5px;top:348px;width:8px;text-align:center">0</div>
<div class="t rl" style="left:2.5px;top:368px;width:8px;text-align:center">2</div>
<div class="t rl" style="left:2.5px;top:378px;width:8px;text-align:center">4</div>
<div class="t rl" style="left:2.5px;top:388px;width:8px;text-align:center">0</div>
<div class="t rl" style="left:2.5px;top:398px;width:8px;text-align:center">0</div>
<div class="t rl" style="left:2.5px;top:418px;width:8px;text-align:center">2</div>
<div class="t rl" style="left:2.5px;top:428px;width:8px;text-align:center">4</div>
<div class="t rl" style="left:2.5px;top:438px;width:8px;text-align:center">5</div>
<div class="t rl" style="left:2.5px;top:448px;width:8px;text-align:center">0</div>
<div class="t rl" style="left:2.5px;top:468px;width:8px;text-align:center">2</div>
<div class="t rl" style="left:2.5px;top:478px;width:8px;text-align:center">5</div>
<div class="t rl" style="left:2.5px;top:488px;width:8px;text-align:center">0</div>
<div class="t rl" style="left:2.5px;top:498px;width:8px;text-align:center">0</div>
<div class="t rl" style="left:2.5px;top:518px;width:8px;text-align:center">2</div>
<div class="t rl" style="left:2.5px;top:528px;width:8px;text-align:center">5</div>
<div class="t rl" style="left:2.5px;top:538px;width:8px;text-align:center">5</div>
<div class="t rl" style="left:2.5px;top:548px;width:8px;text-align:center">0</div>
<div class="t rl" style="left:2.5px;top:568px;width:8px;text-align:center">2</div>
<div class="t rl" style="left:2.5px;top:578px;width:8px;text-align:center">6</div>
<div class="t rl" style="left:2.5px;top:588px;width:8px;text-align:center">0</div>
<div class="t rl" style="left:2.5px;top:598px;width:8px;text-align:center">0</div>
<div class="t rl" style="left:2.5px;top:618px;width:8px;text-align:center">2</div>
<div class="t rl" style="left:2.5px;top:628px;width:8px;text-align:center">6</div>
<div class="t rl" style="left:2.5px;top:638px;width:8px;text-align:center">5</div>
<div class="t rl" style="left:2.5px;top:648px;width:8px;text-align:center">0</div>
<div class="t rl" style="left:2.5px;top:668px;width:8px;text-align:center">2</div>
<div class="t rl" style="left:2.5px;top:678px;width:8px;text-align:center">7</div>
<div class="t rl" style="left:2.5px;top:688px;width:8px;text-align:center">0</div>
<div class="t rl" style="left:2.5px;top:698px;width:8px;text-align:center">0</div>
<div class="t rl" style="left:2.5px;top:718px;width:8px;text-align:center">2</div>
<div class="t rl" style="left:2.5px;top:728px;width:8px;text-align:center">7</div>
<div class="t rl" style="left:2.5px;top:738px;width:8px;text-align:center">5</div>
<div class="t rl" style="left:2.5px;top:748px;width:8px;text-align:center">0</div>
<div class="t rl" style="left:2.5px;top:768px;width:8px;text-align:center">2</div>
<div class="t rl" style="left:2.5px;top:778px;width:8px;text-align:center">8</div>
<div class="t rl" style="left:2.5px;top:788px;width:8px;text-align:center">0</div>
<div class="t rl" style="left:2.5px;top:798px;width:8px;text-align:center">0</div>
<div class="t rl" style="left:2.5px;top:818px;width:8px;text-align:center">2</div>
<div class="t rl" style="left:2.5px;top:828px;width:8px;text-align:center">8</div>
<div class="t rl" style="left:2.5px;top:838px;width:8px;text-align:center">5</div>
<div class="t rl" style="left:2.5px;top:848px;width:8px;text-align:center">0</div>
<div class="t rl" style="left:2.5px;top:868px;width:8px;text-align:center">2</div>
<div class="t rl" style="left:2.5px;top:878px;width:8px;text-align:center">9</div>
<div class="t rl" style="left:2.5px;top:888px;width:8px;text-align:center">0</div>
<div class="t rl" style="left:2.5px;top:898px;width:8px;text-align:center">0</div>
<div class="t rl" style="left:2.5px;top:918px;width:8px;text-align:center">2</div>
<div class="t rl" style="left:2.5px;top:928px;width:8px;text-align:center">9</div>
<div class="t rl" style="left:2.5px;top:938px;width:8px;text-align:center">5</div>
<div class="t rl" style="left:2.5px;top:948px;width:8px;text-align:center">0</div>
</div>
<div class="a" style="left:41px;top:93px;width:17px;height:17px;background:#1b1b1b"></div>
<svg style="left:41px;top:94px" width="16" height="15"><path d="M4.5 0 V15 M0 4.5 H16 M15.5 0 V15" stroke="#6c6c6c" stroke-width="1" fill="none"/></svg>
<div class="a" style="left:1632px;top:93px;width:17px;height:969px;background:#2c2c2c"></div>
<svg style="left:1634px;top:98px" width="10" height="6"><path d="M1 5 L5 1 L9 5" fill="none" stroke="#555" stroke-width="1.4"/></svg>
<svg style="left:1634px;top:1049px" width="10" height="6"><path d="M1 1 L5 5 L9 1" fill="none" stroke="#9a9a9a" stroke-width="1.4"/></svg>
<div class="a" style="left:1632px;top:566px;width:13px;height:26px;border-radius:6px;background:#4a4a4a"></div>
<!-- ======= tools panel ======= -->
<div id="tools" class="a">
<div class="a" style="left:0;top:0;width:40px;height:13px;background:#2b2b2b"></div>
<svg style="left:6px;top:4px" width="8" height="6"><path d="M0 0 L3 3 L0 6 Z M4 0 L7 3 L4 6 Z" fill="#aaa"/></svg>
<div class="a" style="left:10px;top:17px;width:20px;height:5px;background:repeating-linear-gradient(90deg,#222 0 1px,transparent 1px 2px)"></div>
<svg style="left:0;top:0" width="41" height="1017"><rect x="6" y="30" width="28" height="23" rx="3" fill="#1e1e1e"/><g transform="translate(10,31)"><path d="M5.5 2 L5.5 17 L9.3 12.8 L16 12.5 Z" fill="none" stroke="#d4d4d4" stroke-width="1.5" stroke-linejoin="miter"/></g><g transform="translate(10,55)"><path d="M5 1.5 L5 17.5 L9.5 13 L16.5 12.5 Z" fill="#c6c6c6"/><path d="M24 20 L24 16.5 L20.5 20 Z" fill="#8a8a8a"/></g><g transform="translate(10,80)"><path d="M3 17 L12 8" stroke="#c6c6c6" stroke-width="2"/><path d="M14 2 L14.8 4.2 L17 5 L14.8 5.8 L14 8 L13.2 5.8 L11 5 L13.2 4.2 Z M6 2.5 L6.6 4 L8 4.5 L6.6 5 L6 6.5 L5.4 5 L4 4.5 L5.4 4 Z M16 9 L16.5 10.2 L17.8 10.7 L16.5 11.2 L16 12.5 L15.5 11.2 L14.2 10.7 L15.5 10.2 Z" fill="#c6c6c6"/></g><g transform="translate(10,104)"><path d="M9 12 C3 12 1 9 2.5 6 C4 3 9 2 13 3.5 C16 4.5 17 7 16 9" fill="none" stroke="#c6c6c6" stroke-width="1.6"/><circle cx="5" cy="10.5" r="1.8" fill="none" stroke="#c6c6c6" stroke-width="1.3"/><path d="M5.5 12 C6 14 5 15 3.5 15.5" fill="none" stroke="#c6c6c6" stroke-width="1.3"/><path d="M9.5 6 L9.5 18 L12.5 15 L17.5 14.5 Z" fill="#c6c6c6"/></g><g transform="translate(10,131)"><path d="M1 5 H8 M4.5 1.5 V8.5" stroke="#e6e6e6" stroke-width="2"/><path d="M14 3 L18 7 L15.5 9.5 L11.5 5.5 Z" fill="#c6c6c6"/><path d="M11 6.5 L14.5 10 L11.5 15 L5.5 16.5 L7 10.5 Z" fill="#c6c6c6"/><path d="M6 16 L10 12" stroke="#323232" stroke-width="1"/><circle cx="10.3" cy="11.7" r="1.1" fill="#323232"/><path d="M24 20 L24 16.5 L20.5 20 Z" fill="#8a8a8a"/></g><g transform="translate(10,156)"><path d="M15 2 L19 6 L16.5 8.5 L12.5 4.5 Z" fill="#c6c6c6"/><path d="M12 5.5 L15.5 9 L12.5 14 L6.5 15.5 L8 9.5 Z" fill="#c6c6c6"/><path d="M7 15 L11 11" stroke="#323232" stroke-width="1"/><circle cx="11.3" cy="10.7" r="1.1" fill="#323232"/><path d="M7 16 C4 18 1 17 1.5 14 C2 11 4 12 3.5 9 C3.2 7.5 2 7.5 1.5 8" fill="none" stroke="#c6c6c6" stroke-width="1.5"/></g><g transform="translate(10,180)"><path d="M3 2 H17 V6 H15.8 L15.2 4 H11.3 V15.5 L13.5 16 V17.5 H6.5 V16 L8.7 15.5 V4 H4.8 L4.2 6 H3 Z" fill="#d8d8d8"/><path d="M24 20 L24 16.5 L20.5 20 Z" fill="#8a8a8a"/></g><g transform="translate(10,204)"><path d="M3 17 L17 3" stroke="#c6c6c6" stroke-width="1.8"/><path d="M24 20 L24 16.5 L20.5 20 Z" fill="#8a8a8a"/></g><g transform="translate(10,228)"><rect x="2.5" y="3.5" width="15" height="13" fill="#5a5a5a" stroke="#c6c6c6" stroke-width="1.3"/><path d="M24 20 L24 16.5 L20.5 20 Z" fill="#8a8a8a"/></g><g transform="translate(10,252)"><path d="M17.5 2 C14 4 10 8 8.5 11 L11 13 C13.5 11 17 6 17.5 2 Z" fill="#c6c6c6"/><path d="M7.5 12 L10 14 C9.5 17 6 18 2 17.5 C4.5 16.5 4.5 13 7.5 12 Z" fill="#c6c6c6"/><path d="M24 20 L24 16.5 L20.5 20 Z" fill="#8a8a8a"/></g><g transform="translate(10,276)"><circle cx="6.5" cy="11.5" r="4.5" fill="none" stroke="#c6c6c6" stroke-width="1.6"/><path d="M17.5 3 L19 4.8 L10 13.5 L6.5 14.5 L7.5 11.5 Z" fill="#c6c6c6"/><path d="M24 20 L24 16.5 L20.5 20 Z" fill="#8a8a8a"/></g><g transform="translate(10,300)"><path d="M11 2.5 L18 9.5 L10.5 17 L3.5 10 Z" fill="#c6c6c6"/><path d="M3.5 10 L7.5 6 L14.5 13 L10.5 17 Z" fill="#e8e8e8"/><path d="M24 20 L24 16.5 L20.5 20 Z" fill="#8a8a8a"/></g><g transform="translate(10,327)"><path d="M5.5 4.5 A7 7 0 1 1 3.5 12" fill="none" stroke="#c6c6c6" stroke-width="1.7" stroke-dasharray="30 3 2 3 2 3 2 3"/><path d="M2 2.5 L8.5 3 L4 8 Z" fill="#c6c6c6"/><path d="M24 20 L24 16.5 L20.5 20 Z" fill="#8a8a8a"/></g><g transform="translate(10,352)"><rect x="2" y="8.5" width="9" height="9" fill="none" stroke="#c6c6c6" stroke-width="1.3"/><rect x="6.5" y="2.5" width="11" height="11" fill="none" stroke="#c6c6c6" stroke-width="1.3"/><path d="M9 11 L14.5 5.5 M11 5.5 H14.5 V9" fill="none" stroke="#c6c6c6" stroke-width="1.3"/><path d="M24 20 L24 16.5 L20.5 20 Z" fill="#8a8a8a"/></g><g transform="translate(10,376)"><path d="M2 17 C4 13 7 13 9 14.5 C12 16.5 15 16 18 11 C15 12.5 13 12 12.5 10 C12 7.5 9 7.5 8 9 C6 7 8 3 5 2 C6.5 5 3 7 5 10 C3 11 2.5 14 2 17 Z" fill="#c6c6c6"/><circle cx="14" cy="5" r="1.5" fill="#c6c6c6"/><path d="M24 20 L24 16.5 L20.5 20 Z" fill="#8a8a8a"/></g><g transform="translate(10,401)"><rect x="3.5" y="4.5" width="13" height="11" fill="none" stroke="#c6c6c6" stroke-width="1.1" stroke-dasharray="2 1"/><g fill="#c6c6c6"><rect x="2" y="3" width="3" height="3"/><rect x="15" y="3" width="3" height="3"/><rect x="2" y="14" width="3" height="3"/><rect x="15" y="14" width="3" height="3"/></g><path d="M2 4 L2 15 L6 11.5 L11 11 Z" fill="#c6c6c6"/></g><g transform="translate(10,425)"><circle cx="6.5" cy="7" r="4.5" fill="none" stroke="#c6c6c6" stroke-width="1.4"/><circle cx="11.5" cy="7" r="4.5" fill="none" stroke="#c6c6c6" stroke-width="1.4"/><path d="M4 7 H12" stroke="#c6c6c6" stroke-width="1" stroke-dasharray="1.5 1.5"/><path d="M11.5 8 L11.5 19 L14.5 16 L19 15.5 Z" fill="#c6c6c6"/><path d="M24 20 L24 16.5 L20.5 20 Z" fill="#8a8a8a"/></g><g transform="translate(10,449)"><path d="M3 2 V16 L17 18 M3 2 L14 12 V17.5 M3 6.5 L14 14 M3 11 L14 16 M6.5 5 V16.5 M10 8.5 V17" fill="none" stroke="#c6c6c6" stroke-width="1.1"/><path d="M14 14 H19 M14 16.5 H19 M14 12 H19" stroke="#8a8a8a" stroke-width="1"/><path d="M24 20 L24 16.5 L20.5 20 Z" fill="#8a8a8a"/></g><g transform="translate(10,478)"><rect x="2.5" y="3" width="15" height="14" fill="none" stroke="#c6c6c6" stroke-width="1.3"/><path d="M2.5 8 C7 6 12 10 17.5 7.5 M2.5 12.5 C7 10.5 12 14.5 17.5 12 M7.5 3 C6 8 9 12 7.5 17 M12.5 3 C11 8 14 12 12.5 17" fill="none" stroke="#c6c6c6" stroke-width="1.1"/></g><defs><linearGradient id="tg" x1="0" x2="1"><stop offset="0" stop-color="#e0e0e0"/><stop offset="1" stop-color="#3a3a3a"/></linearGradient></defs><g transform="translate(10,502)"><rect x="2.5" y="3.5" width="15" height="13" fill="url(#tg)" stroke="#6a6a6a" stroke-width="1"/></g><g transform="translate(10,526)"><path d="M14 2 C16 0.5 19 3.5 17.5 5.5 L14.5 8.5 L11 5 Z" fill="#c6c6c6"/><path d="M10 5 L14.5 9.5 M11 7 L3.5 14.5 L2.5 17.5 L5.5 16.5 L13 9" fill="none" stroke="#c6c6c6" stroke-width="1.5"/><path d="M24 20 L24 16.5 L20.5 20 Z" fill="#8a8a8a"/></g><g transform="translate(10,550)"><rect x="2" y="3" width="7" height="7" fill="#c6c6c6"/><circle cx="9.5" cy="10.5" r="4" fill="#8a8a8a" stroke="#c6c6c6" stroke-width="1"/><circle cx="14.5" cy="13" r="3.8" fill="#4a4a4a" stroke="#c6c6c6" stroke-width="1.2"/></g><g transform="translate(10,578)"><g fill="#c6c6c6"><rect x="1" y="3" width="2" height="2"/><rect x="4.5" y="3" width="2" height="2"/><rect x="8" y="3" width="2" height="2"/><rect x="1" y="6.5" width="2" height="2"/><rect x="4.5" y="6.5" width="2" height="2"/><rect x="1" y="10" width="2" height="2"/></g><rect x="9" y="7.5" width="9" height="10.5" rx="1.5" fill="none" stroke="#c6c6c6" stroke-width="1.5"/><circle cx="13.5" cy="13" r="2.2" fill="none" stroke="#c6c6c6" stroke-width="1.3"/><path d="M11 7 V4.5 H15 V7" fill="none" stroke="#c6c6c6" stroke-width="1.3"/><path d="M24 20 L24 16.5 L20.5 20 Z" fill="#8a8a8a"/></g><g transform="translate(10,602)"><path d="M2 2 V17.5 H18" fill="none" stroke="#c6c6c6" stroke-width="1.3"/><g fill="#c6c6c6"><rect x="4.5" y="9" width="3" height="7"/><rect x="9" y="4" width="3" height="12"/><rect x="13.5" y="7" width="3" height="9"/></g><path d="M24 20 L24 16.5 L20.5 20 Z" fill="#8a8a8a"/></g><g transform="translate(10,630)"><path d="M5.5 1 V7 M1 4.5 H8" stroke="#c6c6c6" stroke-width="1.2"/><path d="M8 6.5 H14 L18 10.5 V17 H6 V9" fill="none" stroke="#c6c6c6" stroke-width="1.4"/><path d="M14 6.5 V10.5 H18" fill="none" stroke="#c6c6c6" stroke-width="1.1"/></g><g transform="translate(10,656)"><path d="M15.5 2 L18 5 L9 15 L4 17.5 L2.5 16 L6 11.5 Z" fill="none" stroke="#c6c6c6" stroke-width="1.4"/><path d="M6 11.5 L9 15" stroke="#c6c6c6" stroke-width="1.2"/><path d="M24 20 L24 16.5 L20.5 20 Z" fill="#8a8a8a"/></g><g transform="translate(10,680)"><path d="M5 10 V5 C5 3.5 7 3.5 7 5 V9 V3.5 C7 2 9 2 9 3.5 V9 V3 C9 1.5 11 1.5 11 3 V9 V4.5 C11 3 13 3 13 4.5 V11 L14.5 9 C15.5 7.5 17.5 8.5 16.5 10.5 L13.5 16 C12.5 18 11 18.5 9 18.5 C6 18.5 4 16 4 13 Z" fill="#c6c6c6"/><path d="M24 20 L24 16.5 L20.5 20 Z" fill="#8a8a8a"/></g><g transform="translate(10,703)"><circle cx="8" cy="8" r="5.3" fill="none" stroke="#c6c6c6" stroke-width="1.8"/><path d="M12 12 L18 18" stroke="#c6c6c6" stroke-width="2.4"/></g><g transform="translate(10,728)"><rect x="-2.5" y="5.5" width="7" height="7" fill="#fff" stroke="#111" stroke-width="1"/><rect x="-5.5" y="2.5" width="7" height="7" fill="#fff" stroke="#111" stroke-width="1"/><rect x="-3.5" y="4.5" width="3" height="3" fill="#111"/><path d="M17 7 C17 4 20 4 20 7 L20 13 M14.5 9.5 L17 6.5 M23 10.5 L20 13.5 L17.5 10.5" fill="none" stroke="#c6c6c6" stroke-width="1.4"/></g><g transform="translate(0,-63)"><rect x="16.5" y="825.5" width="18" height="18" fill="#fff" stroke="#1a1a1a"/><rect x="21" y="830" width="9" height="9" fill="#323232" stroke="#1a1a1a"/><path d="M17 843 L34 826" stroke="#e0261c" stroke-width="2"/><rect x="6.5" y="814.5" width="19" height="19" fill="#fff" stroke="#1a1a1a"/><path d="M7 833 L25 815" stroke="#e0261c" stroke-width="2"/></g><g transform="translate(0,-63)"><rect x="7" y="851" width="8" height="8" fill="#0a0a0a"/><rect x="16" y="851" width="8" height="8" fill="url(#tg)"/><rect x="25" y="851" width="8" height="8" fill="#fff"/><path d="M25.5 858.5 L32.5 851.5" stroke="#e0261c" stroke-width="1.6"/></g><g transform="translate(10,801)"><circle cx="8" cy="8" r="4.2" fill="none" stroke="#c6c6c6" stroke-width="1.2"/><rect x="8" y="8" width="7" height="7" fill="#c6c6c6"/></g><g transform="translate(10,825)"><rect x="6.500" y="4" width="12" height="8" fill="#6a6a6a" stroke="#c6c6c6" stroke-width="1.2"/><rect x="1.5" y="8" width="11" height="8" fill="#323232" stroke="#c6c6c6" stroke-width="1.2"/></g></svg>
</div>
<!-- dial widget -->
<div class="a" style="left:-62px;top:955px;width:90px;height:90px;border-radius:50%;background:radial-gradient(circle closest-side at 50% 50%,#1a1a1a 0,#0f0f0f 70%,#050505 78%,#060606 93%,#1f5552 96%,#2a4a48 100%)"></div>
<div class="a" style="left:18px;top:990px;width:20px;height:20px;border-radius:50%;background:#101010;border:1px solid #3a3a3a"></div>
<svg style="left:23px;top:995px" width="10" height="10"><circle cx="5" cy="5" r="2.6" fill="none" stroke="#5a5a5a" stroke-width="2.2" stroke-dasharray="1.6 1.1"/><circle cx="5" cy="5" r="2.2" fill="none" stroke="#5a5a5a" stroke-width="1"/></svg>
<!-- ======= status bar ======= -->
<div id="statusbar" class="a">
  <div class="a" style="left:5px;top:1px;width:51px;height:16px;background:#262626"></div>
  <div class="t" style="left:8px;top:5px;font-size:11px;color:#e0e0e0">100%</div>
  <div class="a" style="left:57px;top:1px;width:16px;height:16px;background:#262626"></div>
  <svg style="left:60px;top:7px" width="9" height="6"><path d="M1 1 L4.500 4.5 L8 1" fill="none" stroke="#c8c8c8" stroke-width="1.4"/></svg>
  <svg style="left:81px;top:4px" width="10" height="9"><path d="M1 0 V9" stroke="#c8c8c8" stroke-width="2"/><path d="M9 0 L3 4.5 L9 9 Z" fill="#c8c8c8"/></svg>
  <svg style="left:100px;top:4px" width="6" height="9"><path d="M6 0 L0 4.5 L6 9 Z" fill="#c8c8c8"/></svg>
  <div class="a" style="left:115px;top:1px;width:40px;height:16px;background:#262626"></div>
  <div class="t" style="left:118px;top:5px;font-size:11px;color:#e0e0e0">14</div>
  <div class="a" style="left:156px;top:1px;width:16px;height:16px;background:#262626"></div>
  <svg style="left:159px;top:7px" width="9" height="6"><path d="M1 1 L4.5 4.5 L8 1" fill="none" stroke="#c8c8c8" stroke-width="1.4"/></svg>
  <svg style="left:183px;top:4px" width="6" height="9"><path d="M0 0 L6 4.5 L0 9 Z" fill="#c8c8c8"/></svg>
  <svg style="left:197px;top:4px" width="10" height="9"><path d="M9 0 V9" stroke="#c8c8c8" stroke-width="2"/><path d="M1 0 L7 4.500 L1 9 Z" fill="#c8c8c8"/></svg>
  <div class="a" style="left:217px;top:1px;width:1px;height:16px;background:#333"></div>
  <div class="t" style="left:305px;top:5px;font-size:10px;color:#6c6c6c">選取</div>
  <svg style="left:420px;top:4px" width="7" height="9"><path d="M0 0 L7 4.5 L0 9 Z" fill="#c8c8c8"/></svg>
  <svg style="left:438px;top:5px" width="6" height="8"><path d="M5 0.500 L1 4 L5 7.5" fill="none" stroke="#5a5a5a" stroke-width="1.3"/></svg>
  <svg style="left:1576px;top:5px" width="6" height="8"><path d="M1 0.500 L5 4 L1 7.5" fill="none" stroke="#9a9a9a" stroke-width="1.300"/></svg>
  <div class="a" style="left:1110px;top:1px;width:26px;height:14px;border-radius:7px;background:#484848"></div>
</div>
<div class="a" style="left:0;top:1077px;width:1920px;height:3px;background:linear-gradient(#1c2c2d,#0d2b2d)"></div>
<!-- ======= right panels ======= -->
<div id="rightpanel" class="a">
<div class="a" style="left:0px;top:0px;width:271px;height:13px;background:#282828"></div>
<svg style="left:257px;top:4px" width="8" height="6"><path d="M0 0 L3 3 L0 6 Z M4 0 L7 3 L4 6 Z" fill="#aaa"/></svg>
<div class="a" style="left:0px;top:0px;width:1px;height:1017px;background:#2a2a2a"></div>
<div class="a" style="left:0px;top:13.5px;width:271px;height:26px;background:#272727"></div>
<div class="a" style="left:1px;top:13.5px;width:46px;height:27px;background:#323232"></div>
<div class="t rt" style="left:16px;top:20.5px;color:#ececec;font-size:12px">顏色</div>
<svg style="left:5px;top:21.5px" width="6" height="10"><path d="M0.8 3.8 L3 1.4 L5.2 3.8 M0.8 6.2 L3 8.6 L5.2 6.2" fill="none" stroke="#bdbdbd" stroke-width="1.1"/></svg>
<div class="a" style="left:48px;top:13.5px;width:66px;height:25px;background:#2b2b2b"></div>
<div class="t rt" style="left:57px;top:20.5px;color:#8c8c8c;font-size:12px">色彩參考</div>
<svg style="left:254px;top:22.5px" width="10" height="8"><path d="M0 0.5 H10 M0 2.8 H10 M0 5.1 H10 M0 7.4 H10" stroke="#9a9a9a" stroke-width="1"/></svg>
<svg style="left:6px;top:50px" width="39" height="13"><rect width="13" height="13" fill="#fff"/><path d="M0.5 12.5 L12.5 0.5" stroke="#e0261c" stroke-width="1.8"/><rect x="13" width="13" height="13" fill="#000"/><rect x="26" width="13" height="13" fill="#fff"/></svg>
<div class="t rt" style="left:183px;top:51px;color:#8c8c8c;font-size:12px">#</div>
<div class="a" style="left:195px;top:47px;width:58px;height:19px;background:#262626;border-radius:3px"></div>
<div class="t rt" style="left:200px;top:51px;color:#e6e6e6;font-size:12px">000000</div>
<div class="a" style="left:6.5px;top:73.5px;width:246px;height:88px;background:linear-gradient(to bottom,#fff 0%,rgba(255,255,255,0) 52%,rgba(0,0,0,0) 52%,#000 100%),linear-gradient(to right,#f00 0%,#ff0 16.6%,#0f0 33.3%,#0ff 50%,#00f 66.6%,#f0f 83.3%,#f00 100%)"></div>
<div class="a" style="left:0px;top:167px;width:271px;height:3px;background:#262626"></div>
<div class="a" style="left:0px;top:171px;width:271px;height:26px;background:#272727"></div>
<div class="a" style="left:1px;top:171px;width:40px;height:27px;background:#323232"></div>
<div class="t rt" style="left:10px;top:178px;color:#ececec;font-size:12px">色票</div>
<div class="a" style="left:42px;top:171px;width:40px;height:25px;background:#2b2b2b"></div>
<div class="t rt" style="left:50px;top:178px;color:#8c8c8c;font-size:12px">筆刷</div>
<div class="a" style="left:83px;top:171px;width:42px;height:25px;background:#2b2b2b"></div>
<div class="t rt" style="left:93px;top:178px;color:#8c8c8c;font-size:12px">符號</div>
<svg style="left:254px;top:180px" width="10" height="8"><path d="M0 0.5 H10 M0 2.8 H10 M0 5.1 H10 M0 7.4 H10" stroke="#9a9a9a" stroke-width="1"/></svg>
<svg style="left:6px;top:205px" width="30" height="30"><rect x="10.5" y="10.5" width="18" height="18" fill="#fff" stroke="#2a2a2a"/><rect x="15" y="15" width="9" height="9" fill="#323232"/><path d="M11 28 L28 11" stroke="#e0261c" stroke-width="2"/><rect x="0.5" y="0.5" width="18" height="18" fill="#fff" stroke="#2a2a2a"/><path d="M1 18 L18 1" stroke="#e0261c" stroke-width="2"/></svg>
<div class="a" style="left:217px;top:205px;width:23px;height:23px;background:#1d1d1d;border-radius:3px"></div>
<svg style="left:222px;top:209.5px" width="13" height="14"><path d="M0 1.2 H13 M0 5 H13 M0 8.8 H13 M0 12.6 H13" stroke="#dcdcdc" stroke-width="2"/></svg>
<svg style="left:246px;top:209px" width="15" height="15"><g fill="#c4c4c4"><rect x="0" y="0" width="4" height="4"/><rect x="5.3" y="0" width="4" height="4"/><rect x="10.6" y="0" width="4" height="4"/><rect x="0" y="5.3" width="4" height="4"/><rect x="5.3" y="5.3" width="4" height="4"/><rect x="10.6" y="5.3" width="4" height="4"/><rect x="0" y="10.6" width="4" height="4"/><rect x="5.3" y="10.6" width="4" height="4"/><rect x="10.6" y="10.6" width="4" height="4"/></g></svg>
<div class="a" style="left:5.5px;top:239px;width:258px;height:67px;border:1px solid #3e3e3e;background:#2f2f2f"></div>
<div class="a" style="left:6.5px;top:240px;width:246px;height:20px;background:#3a5471"></div>
<div class="a" style="left:6.5px;top:260px;width:246px;height:1px;background:#3e3e3e"></div>
<div class="a" style="left:6.5px;top:280px;width:246px;height:1px;background:#3e3e3e"></div>
<div class="a" style="left:6.5px;top:300px;width:246px;height:1px;background:#3e3e3e"></div>
<svg style="left:30px;top:243px" width="14" height="14"><rect width="14" height="14" fill="#fff"/><path d="M0.5 13.5 L13.5 0.5" stroke="#e0261c" stroke-width="1.8"/></svg>
<div class="t rt" style="left:49px;top:244px;color:#8f9aa6;font-size:12px">[ 無 ]</div>
<svg style="left:236px;top:243px" width="12" height="12"><rect x="1.5" y="2.5" width="9" height="8" fill="none" stroke="#e0e0e0" stroke-width="1.4"/><path d="M0.5 0.5 L11.5 11.5" stroke="#e0e0e0" stroke-width="1.6"/><path d="M8 0 V3 M4 9 V12" stroke="#e0e0e0" stroke-width="1.2"/></svg>
<div class="a" style="left:30px;top:263px;width:14px;height:14px;background:#000"></div>
<div class="t rt" style="left:49px;top:264px;color:#8c8c8c;font-size:12px">[ 拼版標示色 ]</div>
<svg style="left:236px;top:263px" width="12" height="12"><rect x="0.6" y="0.6" width="10.8" height="10.8" fill="none" stroke="#d8d8d8" stroke-width="1.2"/><circle cx="6" cy="6" r="2.8" fill="none" stroke="#d8d8d8" stroke-width="1.1"/><path d="M6 1 V11 M1 6 H11" stroke="#d8d8d8" stroke-width="1"/></svg>
<div class="a" style="left:30px;top:283px;width:14px;height:14px;background:#fff"></div>
<div class="t rt" style="left:49px;top:284px;color:#e2e2e2;font-size:12px">白色</div>
<svg style="left:236px;top:283px" width="12" height="13"><rect width="12" height="13" fill="#ddd"/><rect x="1" y="1" width="3.4" height="11" fill="#e23a3a"/><rect x="4.4" y="1" width="3.3" height="11" fill="#3aa84a"/><rect x="7.7" y="1" width="3.3" height="11" fill="#3a6ad8"/></svg>
<div class="a" style="left:30px;top:303px;width:14px;height:2px;background:#000"></div>
<div class="a" style="left:236px;top:303.5px;width:12px;height:1.5px;background:#ccc"></div>
<div class="a" style="left:253px;top:240px;width:10px;height:65px;background:#2a2a2a"></div>
<svg style="left:254px;top:242px" width="9" height="6"><path d="M1 5 L4.5 1.5 L8 5" fill="none" stroke="#6a6a6a" stroke-width="1.3"/></svg>
<svg style="left:254px;top:297px" width="9" height="6"><path d="M1 1 L4.5 4.5 L8 1" fill="none" stroke="#6a6a6a" stroke-width="1.3"/></svg>
<div class="a" style="left:253.5px;top:251px;width:9px;height:27px;background:#444;border-radius:5px"></div>
<svg style="left:11px;top:310px" width="15" height="13"><path d="M1 0 V12 M4 0 V12" stroke="#c4c4c4" stroke-width="1.8"/><path d="M6.5 1 L10.5 12" stroke="#c4c4c4" stroke-width="1.8"/><path d="M11 10 H15 L13 12.5 Z" fill="#c4c4c4"/></svg>
<svg style="left:39px;top:310px" width="11" height="12"><circle cx="4" cy="6" r="2.6" fill="none" stroke="#c4c4c4" stroke-width="1.3"/><circle cx="9" cy="1.8" r="1.5" fill="#c4c4c4"/><circle cx="9" cy="10.2" r="1.5" fill="#c4c4c4"/><path d="M5.5 4.5 L8.5 2.2 M5.5 7.5 L8.5 9.8" stroke="#c4c4c4" stroke-width="1"/></svg>
<svg style="left:60px;top:309px" width="20" height="14"><path d="M8 12 C5 12 5 8 8 8 C8 4 13 3.5 14 6.5 C17 5.5 19.5 8 18 10.5 C17.5 11.5 16.5 12 15.5 12 Z" fill="#c4c4c4"/><path d="M0 10.5 H6 M4 8 L6.5 10.5 L4 13" fill="none" stroke="#c4c4c4" stroke-width="1.5"/></svg>
<svg style="left:126px;top:309px" width="16" height="15"><g fill="#c4c4c4"><rect x="0" y="0" width="10.5" height="10.5"/></g><path d="M3.5 0 V10.5 M7 0 V10.5 M0 3.5 H10.5 M0 7 H10.5" stroke="#323232" stroke-width="1"/><path d="M11.5 10 H15.5 L13.5 12.5 Z" fill="#c4c4c4"/></svg>
<svg style="left:153px;top:310px" width="12" height="11"><rect x="0.5" y="0.5" width="11" height="10" fill="none" stroke="#555"/><path d="M2 3.5 H10 M2 5.8 H10 M2 8 H10" stroke="#555" stroke-width="1"/></svg>
<svg style="left:178px;top:310px" width="14" height="11"><path d="M0 1.5 H5 L6 3 H14 V11 H0 Z" fill="#c4c4c4"/></svg>
<svg style="left:206px;top:309px" width="11" height="12"><path d="M0 0 H11 V11 H6 V6 H0 Z" fill="#555"/></svg>
<svg style="left:232px;top:308px" width="10" height="13"><path d="M0 3 H10 M3.5 3 V1 H6.5 V3" stroke="#555" fill="none"/><rect x="1.5" y="4" width="7" height="8.5" fill="none" stroke="#555"/><path d="M4 5.5 V11 M6 5.5 V11" stroke="#555"/></svg>
<div class="a" style="left:0px;top:326px;width:271px;height:3px;background:#262626"></div>
<div class="a" style="left:0px;top:329px;width:271px;height:26px;background:#272727"></div>
<div class="a" style="left:1px;top:329px;width:42px;height:25px;background:#2b2b2b"></div>
<div class="t rt" style="left:10px;top:336px;color:#8c8c8c;font-size:12px">筆畫</div>
<div class="a" style="left:44px;top:329px;width:39px;height:25px;background:#2b2b2b"></div>
<div class="t rt" style="left:51px;top:336px;color:#8c8c8c;font-size:12px">漸層</div>
<div class="a" style="left:84px;top:329px;width:58px;height:27px;background:#323232"></div>
<div class="t rt" style="left:99px;top:336px;color:#ececec;font-size:12px">透明度</div>
<svg style="left:88px;top:337px" width="6" height="10"><path d="M0.8 3.8 L3 1.4 L5.2 3.8 M0.8 6.2 L3 8.6 L5.2 6.2" fill="none" stroke="#bdbdbd" stroke-width="1.1"/></svg>
<svg style="left:254px;top:338px" width="10" height="8"><path d="M0 0.5 H10 M0 2.8 H10 M0 5.1 H10 M0 7.4 H10" stroke="#9a9a9a" stroke-width="1"/></svg>
<div class="a" style="left:6px;top:363px;width:83px;height:20px;background:#262626;border-radius:2px"></div>
<div class="t rt" style="left:12px;top:367px;color:#dcdcdc;font-size:12px">一般</div>
<svg style="left:77px;top:370px" width="9" height="6"><path d="M1 1 L4.5 4.5 L8 1" fill="none" stroke="#d0d0d0" stroke-width="1.4"/></svg>
<div class="t rt" style="left:97px;top:367px;color:#8c8c8c;font-size:12px">不透明度 :</div>
<div class="a" style="left:157px;top:363px;width:67px;height:20px;background:#262626;border-radius:2px"></div>
<div class="a" style="left:206px;top:363px;width:1px;height:20px;background:#323232"></div>
<div class="t rt" style="left:161px;top:367px;color:#e6e6e6;font-size:12.5px">100%</div>
<svg style="left:212px;top:368.5px" width="6" height="9"><path d="M1 1 L4.5 4.5 L1 8" fill="none" stroke="#d0d0d0" stroke-width="1.4"/></svg>
<div class="a" style="left:6px;top:389px;width:258px;height:1px;background:#3a3a3a"></div>
<div class="a" style="left:6px;top:398px;width:132px;height:55px;background:#2e2e2e;border:1px solid #3a3a3a"></div>
<div class="a" style="left:144px;top:396px;width:80px;height:19px;background:#3a3a3a;border-radius:2px"></div>
<div class="t rt" style="left:154px;top:400px;color:#4e4e4e;font-size:12px">製作遮色片</div>
<div class="a" style="left:145px;top:421px;width:12px;height:12px;border:1px solid #4e4e4e"></div>
<div class="t rt" style="left:162px;top:422px;color:#4e4e4e;font-size:12px">剪裁</div>
<div class="a" style="left:145px;top:441px;width:12px;height:12px;border:1px solid #4e4e4e"></div>
<div class="t rt" style="left:162px;top:442px;color:#4e4e4e;font-size:12px">反轉遮色片</div>
<div class="a" style="left:0px;top:460px;width:271px;height:3px;background:#262626"></div>
<div class="a" style="left:0px;top:463px;width:271px;height:26px;background:#272727"></div>
<div class="a" style="left:1px;top:463px;width:42px;height:25px;background:#2b2b2b"></div>
<div class="t rt" style="left:10px;top:470px;color:#8c8c8c;font-size:12px">變形</div>
<div class="a" style="left:44px;top:463px;width:39px;height:25px;background:#2b2b2b"></div>
<div class="t rt" style="left:51px;top:470px;color:#8c8c8c;font-size:12px">對齊</div>
<div class="a" style="left:84px;top:463px;width:77px;height:27px;background:#323232"></div>
<div class="t rt" style="left:94px;top:470px;color:#ececec;font-size:12px">路徑管理員</div>
<svg style="left:254px;top:472px" width="10" height="8"><path d="M0 0.5 H10 M0 2.8 H10 M0 5.1 H10 M0 7.4 H10" stroke="#9a9a9a" stroke-width="1"/></svg>
<div class="t rt" style="left:5px;top:499px;color:#8f8f8f;font-size:12px">形狀模式 :</div>
<svg style="left:11px;top:522px" width="14" height="14"><path d="M0 0 H9 V5 H14 V14 H5 V9 H0 Z" fill="#cfcfcf"/></svg>
<svg style="left:46px;top:522px" width="14" height="14"><path d="M0 0 H9 V5 H5 V9 H0 Z" fill="#cfcfcf"/><rect x="5.5" y="5.5" width="8" height="8" fill="none" stroke="#cfcfcf"/></svg>
<svg style="left:82px;top:522px" width="14" height="14"><rect x="0.5" y="0.5" width="8.5" height="8.5" fill="none" stroke="#cfcfcf"/><rect x="5.5" y="5.5" width="8" height="8" fill="none" stroke="#cfcfcf"/><rect x="5" y="5" width="4" height="4" fill="#cfcfcf"/></svg>
<svg style="left:118px;top:522px" width="14" height="14"><path d="M0 0 H9 V5 H14 V14 H5 V9 H0 Z" fill="#cfcfcf"/><rect x="5" y="5" width="4" height="4" fill="#323232"/></svg>
<div class="a" style="left:149px;top:520px;width:76px;height:19px;background:#373737;border-radius:2px"></div>
<div class="t rt" style="left:175px;top:524px;color:#4c4c4c;font-size:12px">展開</div>
<div class="t rt" style="left:5px;top:550px;color:#8f8f8f;font-size:12px">路徑管理員 :</div>
<svg style="left:14px;top:573px" width="14" height="14"><rect x="0.5" y="0.5" width="8.5" height="8.5" fill="#8a8a8a" stroke="#cfcfcf"/><rect x="5.5" y="5.5" width="8" height="8" fill="#8a8a8a" stroke="#cfcfcf"/><rect x="5.5" y="5.5" width="3.5" height="3.5" fill="#6a6a6a" stroke="#cfcfcf"/></svg>
<svg style="left:51px;top:573px" width="14" height="14"><rect x="0" y="0" width="9" height="9" fill="#9a9a9a"/><rect x="4.5" y="4.5" width="9.5" height="9.5" fill="#cfcfcf"/></svg>
<svg style="left:88px;top:573px" width="14" height="14"><path d="M0 0 H9 V5 H14 V14 H5 V9 H0 Z" fill="#cfcfcf"/><path d="M4.5 4.5 V9" stroke="#aaa"/></svg>
<svg style="left:125px;top:573px" width="14" height="14"><rect x="0.5" y="0.5" width="8.5" height="8.5" fill="none" stroke="#777"/><rect x="5.5" y="5.5" width="8" height="8" fill="none" stroke="#cfcfcf"/><rect x="5" y="5" width="4" height="4" fill="#cfcfcf"/></svg>
<svg style="left:163px;top:573px" width="14" height="14"><rect x="0.5" y="0.5" width="8.5" height="8.5" fill="none" stroke="#cfcfcf"/><rect x="5.5" y="5.5" width="8" height="8" fill="none" stroke="#cfcfcf"/><rect x="5.5" y="5.5" width="3.5" height="3.5" fill="none" stroke="#cfcfcf"/></svg>
<svg style="left:201px;top:573px" width="14" height="14"><rect x="0.5" y="0.5" width="8.5" height="8.5" fill="none" stroke="#cfcfcf"/><path d="M9 5 H14 V14 H5 V9 H9 Z" fill="#cfcfcf"/></svg>
<div class="a" style="left:0px;top:598px;width:271px;height:3px;background:#262626"></div>
<div class="a" style="left:0px;top:601px;width:271px;height:26px;background:#272727"></div>
<div class="a" style="left:1px;top:601px;width:40px;height:27px;background:#323232"></div>
<div class="t rt" style="left:10px;top:608px;color:#ececec;font-size:12px">外觀</div>
<div class="a" style="left:42px;top:601px;width:66px;height:25px;background:#2b2b2b"></div>
<div class="t rt" style="left:51px;top:608px;color:#8c8c8c;font-size:12px">繪圖樣式</div>
<svg style="left:254px;top:610px" width="10" height="8"><path d="M0 0.5 H10 M0 2.8 H10 M0 5.1 H10 M0 7.4 H10" stroke="#9a9a9a" stroke-width="1"/></svg>
<div class="a" style="left:5.5px;top:633px;width:258px;height:180px;border:1px solid #3c3c3c;background:#313131"></div>
<div class="a" style="left:9px;top:638px;width:18px;height:18px;background:#fff"></div>
<div class="t rt" style="left:56px;top:643px;color:#dedede;font-size:12px">無選取範圍</div>
<div class="a" style="left:6.5px;top:660px;width:256px;height:1px;background:#3d3d3d"></div>
<div class="a" style="left:6.5px;top:685px;width:256px;height:1px;background:#3d3d3d"></div>
<div class="a" style="left:6.5px;top:710px;width:256px;height:1px;background:#3d3d3d"></div>
<div class="a" style="left:6.5px;top:735px;width:256px;height:1px;background:#3d3d3d"></div>
<div class="a" style="left:6.5px;top:760px;width:256px;height:1px;background:#3d3d3d"></div>
<div class="a" style="left:6.5px;top:785px;width:256px;height:1px;background:#3d3d3d"></div>
<div class="a" style="left:30px;top:660px;width:1px;height:125px;background:#3d3d3d"></div>
<svg style="left:11px;top:668px" width="14" height="9"><path d="M0 4.5 C3 -0.5 11 -0.5 14 4.5 C11 9.5 3 9.5 0 4.5 Z" fill="#dcdcdc"/><circle cx="7" cy="4.5" r="2.4" fill="#323232"/><circle cx="7.6" cy="4" r="0.9" fill="#dcdcdc"/></svg>
<svg style="left:37px;top:669px" width="9" height="6"><path d="M1 1 L4.5 4.5 L8 1" fill="none" stroke="#c8c8c8" stroke-width="1.3"/></svg>
<div class="t rt" style="left:56px;top:667px;color:#dcdcdc;font-size:12px;border-bottom:1px dotted #999;padding-bottom:1px;">筆畫 :</div>
<svg style="left:99px;top:664px" width="16" height="16"><rect x="0.5" y="0.5" width="15" height="15" fill="#fff" stroke="#111"/><rect x="2" y="2" width="12" height="12" fill="#fff" stroke="#111" stroke-width="0.8"/><path d="M4 12 L12 4" stroke="#c8102e" stroke-width="2.2"/></svg>
<svg style="left:11px;top:693px" width="14" height="9"><path d="M0 4.5 C3 -0.5 11 -0.5 14 4.5 C11 9.5 3 9.5 0 4.5 Z" fill="#4c4c4c"/><circle cx="7" cy="4.5" r="2.4" fill="#323232"/><circle cx="7.6" cy="4" r="0.9" fill="#4c4c4c"/></svg>
<div class="t rt" style="left:79px;top:692px;color:#dcdcdc;font-size:12px"><span style="border-bottom:1px dotted #999;padding-bottom:1px;">不透明度 :</span> 預設</div>
<svg style="left:11px;top:718px" width="14" height="9"><path d="M0 4.5 C3 -0.5 11 -0.5 14 4.5 C11 9.5 3 9.5 0 4.5 Z" fill="#dcdcdc"/><circle cx="7" cy="4.5" r="2.4" fill="#323232"/><circle cx="7.6" cy="4" r="0.9" fill="#dcdcdc"/></svg>
<svg style="left:37px;top:719px" width="9" height="6"><path d="M1 1 L4.5 4.5 L8 1" fill="none" stroke="#c8c8c8" stroke-width="1.3"/></svg>
<div class="t rt" style="left:56px;top:717px;color:#dcdcdc;font-size:12px">填色 :</div>
<svg style="left:99px;top:714px" width="16" height="16"><rect x="0.5" y="0.5" width="15" height="15" fill="#fff" stroke="#111"/><rect x="2" y="2" width="12" height="12" fill="#fff" stroke="#111" stroke-width="0.8"/><path d="M4 12 L12 4" stroke="#c8102e" stroke-width="2.2"/></svg>
<svg style="left:11px;top:743px" width="14" height="9"><path d="M0 4.5 C3 -0.5 11 -0.5 14 4.5 C11 9.5 3 9.5 0 4.5 Z" fill="#4c4c4c"/><circle cx="7" cy="4.5" r="2.4" fill="#323232"/><circle cx="7.6" cy="4" r="0.9" fill="#4c4c4c"/></svg>
<div class="t rt" style="left:79px;top:742px;color:#dcdcdc;font-size:12px"><span style="border-bottom:1px dotted #999;padding-bottom:1px;">不透明度 :</span> 預設</div>
<svg style="left:11px;top:768px" width="14" height="9"><path d="M0 4.5 C3 -0.5 11 -0.5 14 4.5 C11 9.5 3 9.5 0 4.5 Z" fill="#4c4c4c"/><circle cx="7" cy="4.5" r="2.4" fill="#323232"/><circle cx="7.6" cy="4" r="0.9" fill="#4c4c4c"/></svg>
<div class="t rt" style="left:56px;top:767px;color:#dcdcdc;font-size:12px"><span style="border-bottom:1px dotted #999;padding-bottom:1px;">不透明度 :</span> 預設</div>
<svg style="left:12px;top:817px" width="12" height="12"><rect x="1" y="1" width="10" height="10" fill="none" stroke="#e0e0e0" stroke-width="2"/></svg>
<svg style="left:38px;top:817px" width="12" height="12"><rect x="0.5" y="0.5" width="11" height="11" fill="none" stroke="#e0e0e0" stroke-width="1"/><rect x="2.5" y="2.5" width="7" height="7" fill="#c8c8c8"/></svg>
<div class="t rt" style="left:64px;top:815px;color:#d0d0d0;font-size:14px;font-family:'Liberation Serif',serif"><i>fx</i>.</div>
<svg style="left:179px;top:817px" width="12" height="12"><circle cx="6" cy="6" r="4.8" fill="none" stroke="#555" stroke-width="1.6"/><path d="M2.6 2.6 L9.4 9.4" stroke="#555" stroke-width="1.6"/></svg>
<svg style="left:206px;top:816px" width="11" height="12"><path d="M0 0 H11 V11 H6 V6 H0 Z" fill="#555"/></svg>
<svg style="left:232px;top:815px" width="10" height="13"><path d="M0 3 H10 M3.5 3 V1 H6.5 V3" stroke="#555" fill="none"/><rect x="1.5" y="4" width="7" height="8.5" fill="none" stroke="#555"/><path d="M4 5.5 V11 M6 5.5 V11" stroke="#555"/></svg>
<div class="a" style="left:0px;top:832px;width:271px;height:3px;background:#262626"></div>
<div class="a" style="left:0px;top:835px;width:271px;height:26px;background:#272727"></div>
<div class="a" style="left:1px;top:835px;width:42px;height:25px;background:#2b2b2b"></div>
<div class="t rt" style="left:10px;top:842px;color:#8c8c8c;font-size:12px">圖層</div>
<div class="a" style="left:44px;top:835px;width:62px;height:25px;background:#2b2b2b"></div>
<div class="t rt" style="left:51px;top:842px;color:#8c8c8c;font-size:12px">工作區域</div>
<div class="a" style="left:107px;top:835px;width:41px;height:27px;background:#323232"></div>
<div class="t rt" style="left:117px;top:842px;color:#ececec;font-size:12px">連結</div>
<div class="a" style="left:149px;top:835px;width:42px;height:25px;background:#2b2b2b"></div>
<div class="t rt" style="left:158px;top:842px;color:#8c8c8c;font-size:12px">動作</div>
<svg style="left:254px;top:844px" width="10" height="8"><path d="M0 0.5 H10 M0 2.8 H10 M0 5.1 H10 M0 7.4 H10" stroke="#9a9a9a" stroke-width="1"/></svg>
<div class="a" style="left:5.5px;top:867px;width:258px;height:129px;border:1px solid #3a3a3a;background:#303030"></div>
<div class="a" style="left:6.5px;top:902px;width:246px;height:1px;background:#3d3d3d"></div>
<div class="a" style="left:6.5px;top:935px;width:246px;height:1px;background:#3d3d3d"></div>
<div class="a" style="left:6.5px;top:968px;width:246px;height:1px;background:#3d3d3d"></div>
<svg width="0" height="0"><defs><linearGradient id="th" x1="0" x2="0" y1="0" y2="1"><stop offset="0" stop-color="#9a9a9a"/><stop offset="1" stop-color="#e8e8e8"/></linearGradient></defs></svg>
<svg style="left:10px;top:877px" width="25" height="14"><rect width="25" height="14" fill="#fff"/><rect x="4" y="1.5" width="21" height="11.5" fill="url(#th)"/><rect x="2" y="10" width="1.2" height="1.2" fill="#222"/></svg>
<svg style="left:231px;top:879px" width="12" height="12"><rect width="12" height="12" fill="#d4d4d4"/><rect x="1.5" y="6" width="5" height="5" fill="#333"/><path d="M6 1 L9.5 5.5 H2.5 Z" fill="#333" transform="translate(1.5,0)"/></svg>
<svg style="left:10px;top:910px" width="25" height="14"><rect width="25" height="14" fill="#fff"/><rect x="4" y="1.5" width="21" height="11.5" fill="url(#th)"/><rect x="2" y="10" width="1.2" height="1.2" fill="#222"/></svg>
<svg style="left:231px;top:912px" width="12" height="12"><rect width="12" height="12" fill="#d4d4d4"/><rect x="1.5" y="6" width="5" height="5" fill="#333"/><path d="M6 1 L9.5 5.5 H2.5 Z" fill="#333" transform="translate(1.5,0)"/></svg>
<svg style="left:10px;top:943px" width="25" height="14"><rect width="25" height="14" fill="#fff"/><rect x="4" y="1.5" width="21" height="11.5" fill="url(#th)"/><rect x="10" y="6" width="7" height="3" fill="#c66"/><rect x="2" y="10" width="1.2" height="1.2" fill="#222"/></svg>
<svg style="left:231px;top:945px" width="12" height="12"><rect width="12" height="12" fill="#d4d4d4"/><rect x="1.5" y="6" width="5" height="5" fill="#333"/><path d="M6 1 L9.5 5.5 H2.5 Z" fill="#333" transform="translate(1.5,0)"/></svg>
<svg style="left:10px;top:976px" width="25" height="14"><rect width="25" height="14" fill="#fff"/><rect x="4" y="2.5" width="21" height="10" fill="#24383a"/><rect x="11" y="8" width="6" height="1" fill="#9aa"/><rect x="2" y="10" width="1.2" height="1.2" fill="#222"/></svg>
<svg style="left:231px;top:978px" width="12" height="12"><rect width="12" height="12" fill="#d4d4d4"/><rect x="1.5" y="6" width="5" height="5" fill="#333"/><path d="M6 1 L9.5 5.5 H2.5 Z" fill="#333" transform="translate(1.5,0)"/></svg>
<div class="a" style="left:253px;top:868px;width:10px;height:127px;background:#2a2a2a"></div>
<svg style="left:254px;top:872px" width="9" height="6"><path d="M1 5 L4.5 1.5 L8 5" fill="none" stroke="#6a6a6a" stroke-width="1.3"/></svg>
<svg style="left:254px;top:986px" width="9" height="6"><path d="M1 1 L4.5 4.5 L8 1" fill="none" stroke="#6a6a6a" stroke-width="1.3"/></svg>
<div class="a" style="left:253.5px;top:881px;width:9px;height:28px;background:#444;border-radius:5px"></div>
<svg style="left:16px;top:1000px" width="7" height="12"><path d="M0 0 L7 6 L0 12 Z" fill="#c8c8c8"/></svg>
<svg style="left:119px;top:999px" width="19" height="14"><path d="M8 10 C5 10 5 6 8 6 C8 2 13 1.5 14 4.5 C17 3.5 19.5 6 18 8.5 C17.5 9.5 16.5 10 15.5 10 Z" fill="#555"/><rect x="0.5" y="9" width="8" height="4" rx="2" fill="none" stroke="#555"/></svg>
<svg style="left:147px;top:1002px" width="14" height="7"><rect x="0.8" y="0.8" width="7" height="5" rx="2.5" fill="none" stroke="#555" stroke-width="1.5"/><rect x="6" y="0.8" width="7" height="5" rx="2.5" fill="none" stroke="#555" stroke-width="1.5"/></svg>
<svg style="left:172px;top:999px" width="16" height="14"><path d="M0 7 H7 M5 4.5 L7.5 7 L5 9.5" fill="none" stroke="#555" stroke-width="1.5"/><path d="M8 1 H12 L15 4 V13 H8 Z" fill="none" stroke="#555" stroke-width="1.3"/></svg>
<svg style="left:200px;top:1000px" width="13" height="12"><path d="M2 5 A4.5 4.5 0 0 1 10.5 4 M11 7 A4.5 4.5 0 0 1 2.5 8" fill="none" stroke="#555" stroke-width="1.8"/><path d="M8.5 4.5 H12.5 V0.5 Z M4.5 7.5 H0.5 V11.5 Z" fill="#555"/></svg>
<svg style="left:227px;top:1000px" width="11" height="12"><path d="M8.5 0.5 L10.5 2.5 L3 10.5 L0.5 11.5 L1.5 9 Z" fill="#555"/></svg>
</div>
<!-- ======= KISSlicer window ======= -->
<div id="kiss" class="a">
<div class="a" style="left:-1px;top:-2px;width:1261px;height:2px;background:#07838b"></div>
<div class="a" style="left:0px;top:0px;width:1259px;height:29px;background:#07838b"></div>
<svg style="left:10px;top:4px" width="14" height="18"><path d="M1 2 L4 0.5 L5 6 L3 9 L6 12 L4 17 L1.5 17 Z" fill="#1b3f9a"/><path d="M5 0 L8.5 1 L6 6.5 L8 10 L5.5 13.5 L6.5 16.5 L4.5 17 L3.5 13 L5.5 9.5 L3.5 6 Z" fill="#e8e84a"/><path d="M9 2 L13 3.5 L9.5 8 L12.5 12 L12 17 L7.5 17 L9 13 L7 9.5 Z" fill="#1f6fd0"/><path d="M4 15 H12.5 V17.5 H2 Z" fill="#16306f"/></svg>
<div class="t" style="left:29px;top:8.34px;font-size:12px;color:#fff;letter-spacing:0.07px;">KISSlicer (Unregistered)</div>
<svg style="left:1140px;top:12.5px" width="11" height="2"><path d="M0 0.8 H10.5" stroke="#fff" stroke-width="1.1"/></svg>
<svg style="left:1185px;top:8px" width="11" height="11"><rect x="0.6" y="0.6" width="9.8" height="9.8" fill="none" stroke="#fff" stroke-width="1.1"/></svg>
<svg style="left:1231px;top:8px" width="10" height="10"><path d="M0.2 0.2 L9.8 9.8 M9.8 0.2 L0.2 9.8" stroke="#fff" stroke-width="1.2"/></svg>
<div class="a" style="left:0px;top:29px;width:1258px;height:20px;background:linear-gradient(#e6e6e6,#d2d2d2 60%,#c6c6c6);border:1px solid #9a9a9a;border-top-color:#f4f4f4;border-bottom:1.5px solid #777;border-radius:3px"></div>
<div class="t" style="left:9px;top:32.07px;font-size:13.5px;color:#111;letter-spacing:0.41px;">File</div>
<div class="t" style="left:48px;top:32.07px;font-size:13.5px;color:#111;letter-spacing:0.42px;">Preferences</div>
<div class="t" style="left:141px;top:32.07px;font-size:13.5px;color:#111;letter-spacing:0.19px;">All Models</div>
<div class="t" style="left:221px;top:32.07px;font-size:13.5px;color:#111;letter-spacing:0.08px;">Help</div>
<svg style="left:3px;top:59px" width="11" height="11"><circle cx="5.5" cy="5.5" r="4.6" fill="#fff" stroke="#000" stroke-width="1.3"/><path d="M1.5 8 A5 5 0 0 1 8 1.5" fill="none" stroke="#555" stroke-width="1.6"/><circle cx="5.5" cy="5.5" r="2.9" fill="#000"/></svg>
<div class="t" style="left:18px;top:58.07px;font-size:13.5px;color:#111;letter-spacing:0.29px;">Models</div>
<svg style="left:161px;top:59px" width="11" height="11"><circle cx="5.5" cy="5.5" r="4.6" fill="#fff" stroke="#000" stroke-width="1.3"/><path d="M1.5 8 A5 5 0 0 1 8 1.5" fill="none" stroke="#555" stroke-width="1.6"/></svg>
<div class="t" style="left:176px;top:58.07px;font-size:13.5px;color:#111;letter-spacing:0.28px;">Models+Paths</div>
<svg style="left:402px;top:59px" width="11" height="11"><circle cx="5.5" cy="5.5" r="4.6" fill="#fff" stroke="#888" stroke-width="1.3"/></svg>
<div class="t" style="left:417px;top:58.07px;font-size:13.5px;color:#909090;letter-spacing:0.37px;">Paths</div>
<div class="a" style="left:537px;top:56px;width:207px;height:17px;background:#fff;border:1px solid #8a8a8a;border-right-color:#eee;border-bottom-color:#eee;box-shadow:inset 1px 1px 0 #b8b8b8"></div>
<div class="a" style="left:728px;top:57px;width:15px;height:15px;background:#c8c8c8;border:1px solid #e8e8e8;border-right-color:#888;border-bottom-color:#888"></div>
<svg style="left:731px;top:62px" width="9" height="6"><path d="M0 0.5 H9 L4.5 5.5 Z" fill="#8a8a8a"/></svg>
<div class="t" style="left:541px;top:58.07px;font-size:13.5px;color:#8a8a8a;letter-spacing:0.56px;">Path Type</div>
<div class="a" style="left:777px;top:55px;width:252px;height:19px;background:linear-gradient(#f8a660 0,#f5913a 14%,#f48b2f 75%,#f1872a 100%);border:1px solid #a8601f;border-radius:3.5px;box-shadow:inset 0 0 0 1px rgba(255,190,120,.55)"></div>
<div class="t" style="left:882px;top:58.07px;font-size:13.5px;color:#111;font-weight:bold;letter-spacing:1.05px;">Reset</div>
<div class="a" style="left:6px;top:80px;width:1023px;height:18px;border:1px solid #a6a6a6;border-radius:3px;background:linear-gradient(#d8d8d8,#cccccc)"></div>
<div class="a" style="left:8px;top:87px;width:1010px;height:2px;background:#9c9c9c"></div>
<div class="a" style="left:1015px;top:81px;width:12px;height:17px;border:1px solid #aaa;border-radius:3px;background:linear-gradient(#e4e4e4,#cacaca)"></div>
<div class="a" style="left:1019px;top:84px;width:4px;height:11px;border:1px solid #b0b0b0;border-radius:1px"></div>
<div class="t" style="left:1032px;top:82.07px;font-size:13.5px;color:#a8a8a8;letter-spacing:0.05px;">Path%</div>
<div class="a" style="left:1084px;top:54px;width:70px;height:45px;background:linear-gradient(#f8a660 0,#f5913a 14%,#f48b2f 75%,#f1872a 100%);border:1px solid #a8601f;border-radius:3.5px;box-shadow:inset 0 0 0 1px rgba(255,190,120,.55)"></div>
<div class="t" style="left:1094px;top:66.42px;font-size:19px;color:#111;font-weight:bold;letter-spacing:0.48px;">Open</div>
<div class="a" style="left:1094px;top:85px;width:15px;height:2px;background:#111"></div>
<div class="a" style="left:1169px;top:54px;width:70px;height:45px;background:linear-gradient(#f8a660 0,#f5913a 14%,#f48b2f 75%,#f1872a 100%);border:1px solid #a8601f;border-radius:3.5px;box-shadow:inset 0 0 0 1px rgba(255,190,120,.55)"></div>
<div class="t" style="left:1181px;top:66.42px;font-size:19px;color:#111;font-weight:bold;letter-spacing:0.16px;">Slice</div>
<div class="a" style="left:1181px;top:85px;width:13px;height:2px;background:#111"></div>
<div class="a" style="left:1034px;top:104px;width:19px;height:410px;border:1px solid #b4b4b4;border-radius:3px;background:linear-gradient(90deg,#d6d6d6,#cccccc)"></div>
<div class="a" style="left:1042px;top:107px;width:2px;height:404px;background:#a0a0a0"></div>
<div class="a" style="left:1036px;top:302px;width:15px;height:12px;border:1px solid #aaa;border-radius:3px;background:linear-gradient(#e4e4e4,#cacaca)"></div>
<div class="a" style="left:1039px;top:306px;width:9px;height:4px;border:1px solid #b0b0b0;border-radius:1px"></div>
<div class="a" style="left:1059px;top:104px;width:198px;height:351px;border:1px solid #555;border-right-color:#888;border-radius:0 0 4px 4px;box-shadow:inset 1px 1px 0 #f2f2f2;background:#cecece"></div>
<svg style="left:1064px;top:111px" width="95" height="95"><rect width="95" height="95" fill="#404040"/><path d="M17 27 L34.5 23.6 L66 2 L75 22 L71.3 31.6 L29.3 37.3 L20.3 32.6 Z" fill="#a2a2a2"/><path d="M64.5 2.8 L66.3 1.8 L76 22.5 L74.5 24 Z" fill="#c4c4c4"/><path d="M17 27 L24 24.5 L30 36 L22 35 Z" fill="#bdbdbd"/><path d="M27.9 36.8 L72.3 31.2 L80.3 31.6 L80.3 34.2 L29.8 40.5 Z" fill="#cacaca"/><path d="M20.8 34.5 L29.8 39.2 L30.7 91 L25 93.5 L20.8 91 Z" fill="#c4c4c4"/><path d="M72.3 28 L80.3 25 L80.8 81.7 L77 85.5 L73.2 81.7 Z" fill="#c2c2c2"/><path d="M73.9 34.5 L78.8 34 L78.8 75 L73.9 65 Z" fill="#3a3a3a"/><path d="M29.8 40.5 L72.3 34.5 L72.3 64.7 L64.2 46.3 L31 69.8 Z" fill="#393939"/><path d="M31.6 69.4 L64.2 46.3 L72.3 64.7 L34.5 71.5 Z" fill="#9c9c9c"/><path d="M62.8 47.3 L64.6 46 L66 49 L64 50 Z" fill="#e0e0e0"/><path d="M23.1 73.7 L72.3 65.6 L78.4 76 L71.3 79.8 L29.8 85 L23.1 82.6 Z" fill="#a6a6a6"/><path d="M31 71.8 L72.3 64.7 L72.5 66 L31 73.2 Z" fill="#cfcfcf"/><path d="M29.8 85 L71.3 79.8 L78.4 76 L79 77.5 L72 81.5 L30 86.8 Z" fill="#d0d0d0"/><circle cx="25" cy="90.2" r="2.6" fill="#c8c8c8"/><circle cx="25" cy="90.2" r="0.9" fill="#555"/><circle cx="76.5" cy="82.2" r="2.8" fill="#c6c6c6"/><circle cx="76.5" cy="82.2" r="0.9" fill="#555"/><circle cx="76.8" cy="27.5" r="2.8" fill="#c0c0c0"/><circle cx="77.2" cy="27.8" r="0.9" fill="#444"/><circle cx="21.5" cy="32" r="2.6" fill="#b4b4b4"/><circle cx="25.5" cy="35.5" r="0.9" fill="#333"/></svg>
<div class="t" style="left:1064.5px;top:206.57px;font-size:13.5px;color:#111;letter-spacing:0.12px;">prt0001</div>
<div class="a" style="left:1061px;top:223px;width:180px;height:1px;background:#7a7a7a"></div>
<div class="a" style="left:1061px;top:224px;width:180px;height:1px;background:#f0f0f0"></div>
<div class="t" style="left:1166.5px;top:110.07px;font-size:13.5px;color:#111;letter-spacing:0.37px;">Count</div>
<div class="a" style="left:1226px;top:107px;width:14px;height:15px;border:1px solid #8e8e8e;border-radius:3px;background:linear-gradient(#dcdcdc,#c8c8c8)"></div>
<div class="t" style="left:1229px;top:108.92px;font-size:12.5px;color:#333;">X</div>
<div class="a" style="left:1241px;top:106px;width:15px;height:15px;background:#d0d0d0;border:1px solid #f0f0f0;border-right-color:#444;border-bottom-color:#444;box-shadow:1px 1px 0 #222"></div>
<svg style="left:1244px;top:111px" width="9" height="5"><path d="M4.5 0 L9 5 H0 Z" fill="#000"/></svg>
<div class="a" style="left:1241px;top:438px;width:15px;height:15px;background:#d0d0d0;border:1px solid #f0f0f0;border-right-color:#444;border-bottom-color:#444;box-shadow:1px 1px 0 #222"></div>
<svg style="left:1244px;top:443.5px" width="9" height="5"><path d="M0 0 H9 L4.5 5 Z" fill="#000"/></svg>
<div class="a" style="left:1242px;top:123px;width:14px;height:314px;background:linear-gradient(90deg,#c6c6c6,#d4d4d4);border-right:1px solid #f4f4f4;border-left:1px solid #bdbdbd"></div>
<div class="a" style="left:1166px;top:125px;width:12px;height:19px;background:#d0d0d0;border:1px solid #f0f0f0;border-right-color:#444;border-bottom-color:#444;box-shadow:1px 1px 0 #222"></div>
<svg style="left:1169px;top:130px" width="6" height="9"><path d="M6 0 V9 L0 4.5 Z" fill="#000"/></svg>
<div class="a" style="left:1180px;top:126px;width:37px;height:17px;background:#fff;border:1px solid #777;border-right-color:#eee;border-bottom-color:#eee"></div>
<div class="t" style="left:1196px;top:128.07px;font-size:13.5px;color:#111;">1</div>
<div class="a" style="left:1219px;top:125px;width:12px;height:19px;background:#d0d0d0;border:1px solid #f0f0f0;border-right-color:#444;border-bottom-color:#444;box-shadow:1px 1px 0 #222"></div>
<svg style="left:1222.5px;top:130px" width="6" height="9"><path d="M0 0 V9 L6 4.5 Z" fill="#000"/></svg>
<div class="t" style="left:1166.5px;top:148.57px;font-size:13.5px;color:#111;letter-spacing:0.09px;">Height</div>
<div class="a" style="left:1166px;top:164px;width:65px;height:17px;background:#d4d4d4;border:1px solid #6e6e6e;border-right-color:#f0f0f0;border-bottom-color:#f0f0f0;box-shadow:inset 1px 1px 0 #a8a8a8"></div>
<div class="t" style="left:1169.5px;top:166.07px;font-size:13.5px;color:#333;letter-spacing:0.07px;">36.7</div>
<div class="a" style="left:1166px;top:189px;width:35px;height:18px;background:#d4d4d4;border:1px solid #6e6e6e;border-right-color:#f0f0f0;border-bottom-color:#f0f0f0;box-shadow:inset 1px 1px 0 #a8a8a8"></div>
<div class="t" style="left:1169.5px;top:191.07px;font-size:13.5px;color:#333;">0</div>
<div class="a" style="left:1202px;top:189px;width:11px;height:9px;background:#d0d0d0;border:1px solid #f0f0f0;border-right-color:#444;border-bottom-color:#444;box-shadow:1px 1px 0 #222"></div>
<svg style="left:1204.5px;top:191.5px" width="7" height="4"><path d="M3.5 0 L7 4 H0 Z" fill="#000"/></svg>
<div class="a" style="left:1202px;top:198px;width:11px;height:9px;background:#d0d0d0;border:1px solid #f0f0f0;border-right-color:#444;border-bottom-color:#444;box-shadow:1px 1px 0 #222"></div>
<svg style="left:1204.5px;top:201.5px" width="7" height="4"><path d="M0 0 H7 L3.5 4 Z" fill="#000"/></svg>
<svg style="left:1217px;top:193px" width="6" height="6"><circle cx="3" cy="3" r="2" fill="none" stroke="#222" stroke-width="1.1"/></svg>
<div class="a" style="left:1060px;top:461px;width:67px;height:17px;background:#fff;border:1px solid #b0b0b0;border-right-color:#eee;border-bottom-color:#eee"></div>
<div class="a" style="left:1111px;top:463px;width:15px;height:14px;background:#c6c6c6;border:1px solid #dedede;border-right-color:#999;border-bottom-color:#999"></div>
<svg style="left:1114.5px;top:467.5px" width="9" height="5"><path d="M0 0 H9 L4.5 5 Z" fill="#999"/></svg>
<div class="t" style="left:1064.5px;top:463.57px;font-size:13.5px;color:#a8a8a8;letter-spacing:0.44px;">G-code</div>
<div class="t" style="left:1059px;top:481.57px;font-size:13.5px;color:#a8a8a8;letter-spacing:0.29px;">Z value</div>
<div class="t" style="left:1057.5px;top:499.07px;font-size:13.5px;color:#a8a8a8;letter-spacing:-0.14px;">0.0</div>
<div class="a" style="left:1134px;top:461px;width:124px;height:51px;background:#fff;border:1px solid #a8a8a8;border-radius:3px"></div>
<div class="t" style="left:1147.5px;top:465.18px;font-size:12.8px;color:#333;font-family:'Liberation Mono',monospace;letter-spacing:0.02px;">[cm^3] 0.00</div>
<div class="t" style="left:1170.6px;top:482.18px;font-size:12.8px;color:#333;font-family:'Liberation Mono',monospace;letter-spacing:0.02px;">[s] 0.00</div>
<div class="t" style="left:1155.2px;top:499.68px;font-size:12.8px;color:#333;font-family:'Liberation Mono',monospace;letter-spacing:0.02px;">[min] 0.00</div>
<div class="a" style="left:1087px;top:529px;width:11px;height:11px;background:#fff;border:1px solid #555;border-right-color:#ddd;border-bottom-color:#ddd"></div>
<svg style="left:1088.5px;top:530.5px" width="9" height="9"><path d="M1.2 4.5 L3.5 7.2 L7.8 1.5" fill="none" stroke="#000" stroke-width="1.8"/></svg>
<div class="t" style="left:1103.5px;top:528.57px;font-size:13.5px;color:#111;font-weight:bold;letter-spacing:0.37px;">Show Settings</div>
<div class="t" style="left:1084.5px;top:550.07px;font-size:13.5px;color:#111;letter-spacing:0.25px;">Settings Level</div>
<svg style="left:1240px;top:552.5px" width="13" height="8"><path d="M0 0 H13 L6.5 7.5 Z" fill="#8c8c8c"/></svg>
<div class="a" style="left:1084px;top:566px;width:148px;height:22px;background:#fff;border:1.5px solid #111;border-right:1px solid #e8e8e8;border-bottom:1px solid #e8e8e8"></div>
<div class="a" style="left:1212px;top:568px;width:19px;height:19px;background:#d0d0d0;border:1px solid #f0f0f0;border-right-color:#444;border-bottom-color:#444;box-shadow:1px 1px 0 #222;background:#c8c8c8"></div>
<svg style="left:1216px;top:574px" width="11" height="6.5"><path d="M0 0 H11 L5.5 6.5 Z" fill="#000"/></svg>
<div class="t" style="left:1089.5px;top:570.57px;font-size:13.5px;color:#111;letter-spacing:0.09px;">Expert</div>
<div class="a" style="left:1242px;top:571px;width:11px;height:12px;background:#fff;border:1px solid #b8b8b8;border-right-color:#eee;border-bottom-color:#eee"></div>
<div class="t" style="left:1111px;top:601.92px;font-size:12.5px;color:#222;letter-spacing:-0.06px;white-space:pre;">Loops:  14.25 [mm/s]</div>
<div class="t" style="left:1114.5px;top:616.92px;font-size:12.5px;color:#222;letter-spacing:-0.13px;white-space:pre;">Solid:  20.55 [mm/s]</div>
<div class="t" style="left:1110.5px;top:631.92px;font-size:12.5px;color:#222;letter-spacing:-0.1px;white-space:pre;">Sparse: 30.00 [mm/s]</div>
<div class="a" style="left:1084px;top:650px;width:34px;height:19px;border:1px solid #9a9a9a;border-radius:4px;background:linear-gradient(#e2e2e2,#cfcfcf 50%,#c4c4c4)"></div>
<div class="t" style="left:1093px;top:653.07px;font-size:13.5px;color:#222;letter-spacing:0.47px;">63</div>
<div class="a" style="left:1119px;top:650px;width:134px;height:19px;border:1px solid #9a9a9a;border-radius:4px;background:linear-gradient(#e2e2e2,#cfcfcf 50%,#c4c4c4)"></div>
<div class="a" style="left:1121px;top:658px;width:130px;height:3px;background:#111"></div>
<div class="a" style="left:1195px;top:652px;width:13px;height:16px;border:1px solid #8a8a8a;border-radius:3px;background:linear-gradient(#ececec,#cdcdcd)"></div>
<div class="a" style="left:1199px;top:655px;width:5px;height:10px;border:1px solid #777;border-radius:1px;background:#e6e6e6"></div>
<svg style="left:1122px;top:671.5px" width="7" height="13"><path d="M7 0 V13 L0 6.5 Z" fill="#000"/></svg>
<div class="t" style="left:1134.5px;top:671.00px;font-size:13px;color:#222;letter-spacing:-0.6px;">Fast</div>
<div class="t" style="left:1197.5px;top:671.00px;font-size:13px;color:#222;letter-spacing:-0.39px;">Precise</div>
<svg style="left:1243px;top:671.5px" width="7" height="13"><path d="M0 0 V13 L7 6.5 Z" fill="#000"/></svg>
<div class="a" style="left:1084px;top:690px;width:74px;height:39px;background:linear-gradient(#f8a660 0,#f5913a 14%,#f48b2f 75%,#f1872a 100%);border:1px solid #a8601f;border-radius:3.5px;box-shadow:inset 0 0 0 1px rgba(255,190,120,.55)"></div>
<div class="t" style="left:1104.5px;top:694.65px;font-size:14px;color:#111;font-weight:bold;letter-spacing:-0.33px;">Copy</div>
<div class="t" style="left:1097.5px;top:710.65px;font-size:14px;color:#111;font-weight:bold;letter-spacing:0.4px;">Printer</div>
<div class="a" style="left:1084px;top:740px;width:74px;height:39px;background:linear-gradient(#f8a660 0,#f5913a 14%,#f48b2f 75%,#f1872a 100%);border:1px solid #a8601f;border-radius:3.5px;box-shadow:inset 0 0 0 1px rgba(255,190,120,.55)"></div>
<div class="t" style="left:1098.5px;top:744.65px;font-size:14px;color:#111;font-weight:bold;letter-spacing:0.59px;">Delete</div>
<div class="t" style="left:1097.5px;top:760.65px;font-size:14px;color:#111;font-weight:bold;letter-spacing:0.4px;">Printer</div>
<div class="a" style="left:1164px;top:690px;width:14px;height:69px;border:1px solid #9a9a9a;border-radius:4px;background:linear-gradient(90deg,#e2e2e2,#cfcfcf 50%,#c4c4c4)"></div>
<div class="a" style="left:1166px;top:719px;width:10px;height:16px;border:1px solid #8a8a8a;border-radius:3px;background:linear-gradient(90deg,#e8e8e8,#cacaca)"></div>
<div class="a" style="left:1184px;top:690px;width:69px;height:69px;background:linear-gradient(#f8a660 0,#f5913a 14%,#f48b2f 75%,#f1872a 100%);border:1px solid #a8601f;border-radius:3.5px;box-shadow:inset 0 0 0 1px rgba(255,190,120,.55)"></div>
<div class="t" style="left:1194.5px;top:717.23px;font-size:14.5px;color:#111;font-weight:bold;letter-spacing:0.51px;">Center</div>
<div class="a" style="left:1184px;top:765px;width:69px;height:14px;border:1px solid #9a9a9a;border-radius:4px;background:linear-gradient(#e2e2e2,#cfcfcf 50%,#c4c4c4)"></div>
<div class="a" style="left:1211px;top:767px;width:17px;height:11px;border:1px solid #8a8a8a;border-radius:3px;background:linear-gradient(#e8e8e8,#cacaca)"></div>
<div class="a" style="left:544px;top:550px;width:534px;height:254px;border:1px solid #8a8a8a;border-radius:4px;box-shadow:inset 1px 1px 0 #f0f0f0;background:#cecece"></div>
<div class="a" style="left:546px;top:522px;width:48px;height:28px;border:1px solid #9c9c9c;border-bottom:0;border-radius:4px 4px 0 0;background:linear-gradient(#dedede,#cdcdcd 55%,#c6c6c6);box-shadow:inset 1px 1px 0 #efefef"></div>
<div class="t" style="left:552.5px;top:528.96px;font-size:16px;color:#111;font-weight:bold;letter-spacing:-0.56px;">Style</div>
<div class="a" style="left:596px;top:522px;width:71px;height:28px;border:1px solid #9c9c9c;border-bottom:0;border-radius:4px 4px 0 0;background:linear-gradient(#dedede,#cdcdcd 55%,#c6c6c6);box-shadow:inset 1px 1px 0 #efefef"></div>
<div class="t" style="left:602.5px;top:528.96px;font-size:16px;color:#111;font-weight:bold;letter-spacing:-0.05px;">Support</div>
<div class="a" style="left:670px;top:522px;width:77px;height:28px;border:1px solid #9c9c9c;border-bottom:0;border-radius:4px 4px 0 0;background:linear-gradient(#dedede,#cdcdcd 55%,#c6c6c6);box-shadow:inset 1px 1px 0 #efefef"></div>
<div class="t" style="left:675.5px;top:528.96px;font-size:16px;color:#111;font-weight:bold;letter-spacing:-0.36px;">( Material</div>
<div class="a" style="left:750px;top:522px;width:73px;height:28px;border:1px solid #9c9c9c;border-bottom:0;border-radius:4px 4px 0 0;background:linear-gradient(#dedede,#cdcdcd 55%,#c6c6c6);box-shadow:inset 1px 1px 0 #efefef"></div>
<div class="t" style="left:755.5px;top:528.96px;font-size:16px;color:#111;font-weight:bold;letter-spacing:-0.34px;">G-code )</div>
<div class="a" style="left:826px;top:520px;width:69px;height:32px;border:1px solid #9c9c9c;border-bottom:0;border-radius:4px 4px 0 0;background:linear-gradient(#dedede,#cdcdcd 55%,#cecece);box-shadow:inset 1px 1px 0 #efefef"></div>
<div class="t" style="left:831.5px;top:527.96px;font-size:16px;color:#111;font-weight:bold;letter-spacing:-0.23px;">[ Printer</div>
<div class="a" style="left:898px;top:522px;width:73px;height:28px;border:1px solid #9c9c9c;border-bottom:0;border-radius:4px 4px 0 0;background:linear-gradient(#dedede,#cdcdcd 55%,#c6c6c6);box-shadow:inset 1px 1px 0 #efefef"></div>
<div class="t" style="left:903.5px;top:528.96px;font-size:16px;color:#111;font-weight:bold;letter-spacing:-0.27px;">G-code ]</div>
<div class="a" style="left:974px;top:522px;width:48px;height:28px;border:1px solid #9c9c9c;border-bottom:0;border-radius:4px 4px 0 0;background:linear-gradient(#dedede,#cdcdcd 55%,#c6c6c6);box-shadow:inset 1px 1px 0 #efefef"></div>
<div class="t" style="left:979.5px;top:528.96px;font-size:16px;color:#111;font-weight:bold;letter-spacing:-0.5px;">Misc.</div>
<div class="a" style="left:1025px;top:522px;width:44px;height:28px;border:1px solid #9c9c9c;border-bottom:0;border-radius:4px 4px 0 0;background:linear-gradient(#dedede,#cdcdcd 55%,#c6c6c6);box-shadow:inset 1px 1px 0 #efefef"></div>
<div class="t" style="left:1030.5px;top:528.96px;font-size:16px;color:#9a9a9a;font-weight:bold;letter-spacing:-0.34px;">PRO</div>
<div class="t" style="left:549.5px;top:558.07px;font-size:13.5px;color:#222;letter-spacing:0.13px;">Printer Name</div>
<div class="a" style="left:634px;top:556px;width:433px;height:17px;background:#fff;border:1.5px solid #111;border-right:1px solid #e8e8e8;border-bottom:1px solid #e8e8e8"></div>
<div class="a" style="left:1051px;top:557px;width:15px;height:15px;background:#d0d0d0;border:1px solid #f0f0f0;border-right-color:#444;border-bottom-color:#444;box-shadow:1px 1px 0 #222;background:#c8c8c8"></div>
<svg style="left:1054.5px;top:562px" width="9" height="5.5"><path d="M0 0 H9 L4.5 5.5 Z" fill="#000"/></svg>
<div class="t" style="left:638.5px;top:558.07px;font-size:13.5px;color:#111;letter-spacing:0.23px;">ATOM 3D PRINTER</div>
<div class="a" style="left:544px;top:600px;width:534px;height:204px;border:1px solid #8a8a8a;border-radius:4px;box-shadow:inset 1px 1px 0 #f0f0f0;background:#cecece"></div>
<div class="a" style="left:546px;top:578px;width:76px;height:22px;border:1px solid #9c9c9c;border-bottom:0;border-radius:4px 4px 0 0;background:linear-gradient(#dedede,#cdcdcd 55%,#c6c6c6);box-shadow:inset 1px 1px 0 #efefef"></div>
<div class="t" style="left:551.5px;top:583.15px;font-size:14px;color:#111;font-weight:bold;letter-spacing:0.31px;">Hardware</div>
<div class="a" style="left:625px;top:578px;width:74px;height:22px;border:1px solid #9c9c9c;border-bottom:0;border-radius:4px 4px 0 0;background:linear-gradient(#dedede,#cdcdcd 55%,#c6c6c6);box-shadow:inset 1px 1px 0 #efefef"></div>
<div class="t" style="left:630.5px;top:583.15px;font-size:14px;color:#111;font-weight:bold;letter-spacing:0.25px;">Firmware</div>
<div class="a" style="left:702px;top:578px;width:54px;height:22px;border:1px solid #9c9c9c;border-bottom:0;border-radius:4px 4px 0 0;background:linear-gradient(#dedede,#cdcdcd 55%,#c6c6c6);box-shadow:inset 1px 1px 0 #efefef"></div>
<div class="t" style="left:708.5px;top:583.15px;font-size:14px;color:#111;font-weight:bold;letter-spacing:0.25px;">Speed</div>
<div class="a" style="left:760px;top:576px;width:140px;height:26px;border:1px solid #9c9c9c;border-bottom:0;border-radius:4px 4px 0 0;background:linear-gradient(#dedede,#cdcdcd 55%,#cecece);box-shadow:inset 1px 1px 0 #efefef"></div>
<div class="t" style="left:764.5px;top:582.15px;font-size:14px;color:#111;font-weight:bold;letter-spacing:0.33px;">Extruder Hardware</div>
<div class="a" style="left:761px;top:577px;width:137px;height:24px;border:1px dotted #222"></div>
<div class="a" style="left:903px;top:578px;width:139px;height:22px;border:1px solid #9c9c9c;border-bottom:0;border-radius:4px 4px 0 0;background:linear-gradient(#dedede,#cdcdcd 55%,#c6c6c6);box-shadow:inset 1px 1px 0 #efefef"></div>
<div class="t" style="left:908.5px;top:582.65px;font-size:14px;color:#111;font-weight:bold;letter-spacing:0.4px;">Extruder Materials</div>
<div class="t" style="left:586.5px;top:620.07px;font-size:13.5px;color:#222;letter-spacing:0.08px;">Extruder 1</div>
<div class="t" style="left:668.5px;top:610.07px;font-size:13.5px;color:#222;letter-spacing:0.14px;">Gain 1</div>
<div class="a" style="left:664px;top:625px;width:49px;height:19px;background:#fff;border:1px solid #9a9a9a;border-radius:4px"></div>
<div class="t" style="left:668px;top:628.07px;font-size:13.5px;color:#111;">1</div>
<div class="t" style="left:725.5px;top:610.07px;font-size:13.5px;color:#222;letter-spacing:-0.35px;">Axis 1</div>
<div class="a" style="left:724px;top:626px;width:38px;height:17px;background:#fff;border:1.5px solid #111;border-right:1px solid #e8e8e8;border-bottom:1px solid #e8e8e8"></div>
<div class="a" style="left:746px;top:627px;width:15px;height:15px;background:#d0d0d0;border:1px solid #f0f0f0;border-right-color:#444;border-bottom-color:#444;box-shadow:1px 1px 0 #222;background:#c8c8c8"></div>
<svg style="left:749.5px;top:632.5px" width="9" height="5.5"><path d="M0 0 H9 L4.5 5.5 Z" fill="#000"/></svg>
<div class="t" style="left:729.5px;top:628.07px;font-size:13.5px;color:#111;">E</div>
<div class="t" style="left:894.5px;top:610.07px;font-size:13.5px;color:#222;letter-spacing:0.3px;">Extruder Clearance (Radius)</div>
<div class="a" style="left:959px;top:626px;width:49px;height:18px;background:#fff;border:1px solid #9a9a9a;border-radius:4px"></div>
<div class="t" style="left:962.5px;top:628.07px;font-size:13.5px;color:#111;">0</div>
<div class="t" style="left:586.5px;top:665.07px;font-size:13.5px;color:#9c9c9c;letter-spacing:0.19px;">Extruder 2</div>
<div class="t" style="left:668.5px;top:655.07px;font-size:13.5px;color:#9c9c9c;letter-spacing:0.24px;">Gain 2</div>
<div class="a" style="left:664px;top:670px;width:49px;height:19px;background:#dadada;border:1px solid #b6b6b6;border-radius:4px"></div>
<div class="t" style="left:668px;top:673.07px;font-size:13.5px;color:#9c9c9c;">1</div>
<div class="t" style="left:725px;top:655.07px;font-size:13.5px;color:#9c9c9c;letter-spacing:-0.05px;">Axis 2</div>
<div class="a" style="left:724px;top:671px;width:38px;height:18px;background:#fff;border:1px solid #b0b0b0;border-right-color:#e8e8e8;border-bottom-color:#e8e8e8"></div>
<div class="a" style="left:746px;top:672px;width:15px;height:15px;background:#c6c6c6;border:1px solid #dedede;border-right-color:#999;border-bottom-color:#999"></div>
<svg style="left:749px;top:677.5px" width="9" height="5"><path d="M0 0 H9 L4.5 5 Z" fill="#8e8e8e"/></svg>
<div class="t" style="left:729.5px;top:673.07px;font-size:13.5px;color:#9c9c9c;">E</div>
<div class="t" style="left:778.5px;top:655.07px;font-size:13.5px;color:#9c9c9c;letter-spacing:0.2px;">X off 2</div>
<div class="a" style="left:774px;top:670px;width:49px;height:19px;background:#dadada;border:1px solid #b6b6b6;border-radius:4px"></div>
<div class="t" style="left:777.5px;top:673.07px;font-size:13.5px;color:#9c9c9c;">0</div>
<div class="t" style="left:838.5px;top:655.07px;font-size:13.5px;color:#9c9c9c;letter-spacing:0.24px;">Y off 2</div>
<div class="a" style="left:834px;top:670px;width:49px;height:19px;background:#dadada;border:1px solid #b6b6b6;border-radius:4px"></div>
<div class="t" style="left:837.5px;top:673.07px;font-size:13.5px;color:#9c9c9c;">0</div>
<div class="t" style="left:586.5px;top:710.07px;font-size:13.5px;color:#9c9c9c;letter-spacing:0.19px;">Extruder 3</div>
<div class="t" style="left:668.5px;top:700.07px;font-size:13.5px;color:#9c9c9c;letter-spacing:0.24px;">Gain 3</div>
<div class="a" style="left:664px;top:715px;width:49px;height:19px;background:#dadada;border:1px solid #b6b6b6;border-radius:4px"></div>
<div class="t" style="left:668px;top:718.07px;font-size:13.5px;color:#9c9c9c;">1</div>
<div class="t" style="left:725px;top:700.07px;font-size:13.5px;color:#9c9c9c;letter-spacing:-0.05px;">Axis 3</div>
<div class="a" style="left:724px;top:716px;width:38px;height:18px;background:#fff;border:1px solid #b0b0b0;border-right-color:#e8e8e8;border-bottom-color:#e8e8e8"></div>
<div class="a" style="left:746px;top:717px;width:15px;height:15px;background:#c6c6c6;border:1px solid #dedede;border-right-color:#999;border-bottom-color:#999"></div>
<svg style="left:749px;top:722.5px" width="9" height="5"><path d="M0 0 H9 L4.5 5 Z" fill="#8e8e8e"/></svg>
<div class="t" style="left:729.5px;top:718.07px;font-size:13.5px;color:#9c9c9c;">E</div>
<div class="t" style="left:778.5px;top:700.07px;font-size:13.5px;color:#9c9c9c;letter-spacing:0.2px;">X off 3</div>
<div class="a" style="left:774px;top:715px;width:49px;height:19px;background:#dadada;border:1px solid #b6b6b6;border-radius:4px"></div>
<div class="t" style="left:777.5px;top:718.07px;font-size:13.5px;color:#9c9c9c;">0</div>
<div class="t" style="left:838.5px;top:700.07px;font-size:13.5px;color:#9c9c9c;letter-spacing:0.24px;">Y off 3</div>
<div class="a" style="left:834px;top:715px;width:49px;height:19px;background:#dadada;border:1px solid #b6b6b6;border-radius:4px"></div>
<div class="t" style="left:837.5px;top:718.07px;font-size:13.5px;color:#9c9c9c;">0</div>
<div class="t" style="left:586.5px;top:755.07px;font-size:13.5px;color:#9c9c9c;letter-spacing:0.19px;">Extruder 4</div>
<div class="t" style="left:668.5px;top:745.07px;font-size:13.5px;color:#9c9c9c;letter-spacing:0.24px;">Gain 4</div>
<div class="a" style="left:664px;top:760px;width:49px;height:19px;background:#dadada;border:1px solid #b6b6b6;border-radius:4px"></div>
<div class="t" style="left:668px;top:763.07px;font-size:13.5px;color:#9c9c9c;">1</div>
<div class="t" style="left:725px;top:745.07px;font-size:13.5px;color:#9c9c9c;letter-spacing:-0.05px;">Axis 4</div>
<div class="a" style="left:724px;top:761px;width:38px;height:18px;background:#fff;border:1px solid #b0b0b0;border-right-color:#e8e8e8;border-bottom-color:#e8e8e8"></div>
<div class="a" style="left:746px;top:762px;width:15px;height:15px;background:#c6c6c6;border:1px solid #dedede;border-right-color:#999;border-bottom-color:#999"></div>
<svg style="left:749px;top:767.5px" width="9" height="5"><path d="M0 0 H9 L4.5 5 Z" fill="#8e8e8e"/></svg>
<div class="t" style="left:729.5px;top:763.07px;font-size:13.5px;color:#9c9c9c;">E</div>
<div class="t" style="left:778.5px;top:745.07px;font-size:13.5px;color:#9c9c9c;letter-spacing:0.2px;">X off 4</div>
<div class="a" style="left:774px;top:760px;width:49px;height:19px;background:#dadada;border:1px solid #b6b6b6;border-radius:4px"></div>
<div class="t" style="left:777.5px;top:763.07px;font-size:13.5px;color:#9c9c9c;">0</div>
<div class="t" style="left:838.5px;top:745.07px;font-size:13.5px;color:#9c9c9c;letter-spacing:0.24px;">Y off 4</div>
<div class="a" style="left:834px;top:760px;width:49px;height:19px;background:#dadada;border:1px solid #b6b6b6;border-radius:4px"></div>
<div class="t" style="left:837.5px;top:763.07px;font-size:13.5px;color:#9c9c9c;">0</div>
<div class="t" style="left:12px;top:581.57px;font-size:13.5px;color:#111;font-weight:bold;letter-spacing:0.05px;">Style:</div>
<div class="t" style="left:19.5px;top:597.57px;font-size:13.5px;color:#111;font-weight:bold;letter-spacing:0.46px;">Normal models</div>
<div class="t" style="left:12px;top:629.57px;font-size:13.5px;color:#111;font-weight:bold;letter-spacing:0.39px;">Support:</div>
<div class="t" style="left:19.5px;top:645.57px;font-size:13.5px;color:#111;font-weight:bold;letter-spacing:0.81px;">60degree support</div>
<div class="t" style="left:12px;top:677.57px;font-size:13.5px;color:#111;font-weight:bold;letter-spacing:0.43px;">Printer:</div>
<div class="t" style="left:19.5px;top:693.57px;font-size:13.5px;color:#111;font-weight:bold;letter-spacing:0.25px;">ATOM 3D PRINTER</div>
<div class="t" style="left:12px;top:725.57px;font-size:13.5px;color:#111;font-weight:bold;letter-spacing:0.54px;">Material(s):</div>
<div class="t" style="left:19.5px;top:741.57px;font-size:13.5px;color:#111;font-weight:bold;letter-spacing:0.45px;">Ext1 - sample material</div>
<svg style="left:5px;top:104px;overflow:hidden" width="1024" height="411" viewBox="0 0 1024 411"><rect width="1024" height="411" fill="#101010"/><defs><clipPath id="incl"><polygon points="312.7,411.5 306.4,408.3 300,405.2 292.8,400.4 283.6,393.2 273.5,384.3 264.9,374.5 258.8,363.4 254.3,351.5 251,340.6 248.4,332.5 247,325.5 248.2,316.7 252.1,304.3 258.5,290.2 268.9,276.9 284.6,265.3 304.2,254.6 324.7,245 345.8,236.4 367.8,228.8 388.4,223 406.8,219.5 423.8,217.6 440,216.3 454.8,215.1 468.7,214.4 484,213.9 502.2,213.5 521.6,213.2 539.8,213 555.2,212.6 569.2,212.3 583.7,213.1 599.8,215.5 616.3,219 631.5,223 644.2,227.1 655.5,231.7 667.3,237 680.6,243 694.3,249.7 707.2,257 718.8,265.2 729.4,274 739,282.8 747.8,291.2 755.5,299.6 761,308.7 763.8,319.6 764.4,331.2 763.7,340.6 762.1,345.4 759.2,347.9 755,352.5 750.2,361.2 744.1,371.8 735,382.4 721.2,392.2 704.2,401.8 687.3,411.5"/></clipPath></defs><polygon points="13.9,411.5 25.5,395 37.2,378.4 53.7,360.5 78.1,339.4 107.3,316.9 137.4,296.8 167.3,281 198.2,267.5 229,255 260.4,242.3 291.9,230.6 320.7,221 344.9,214.6 366.4,210.4 388.4,207 412.4,204 436.8,201.8 460,200 480.6,198.3 500,196.9 520,196.5 539.7,196.8 560,197.9 585.7,201.2 620.4,207.5 660.3,215.9 699.2,225 734.8,233.5 769.2,242.7 802.8,255 837.2,272.9 870.7,293.9 898.4,312.7 916.5,325.9 928.8,337 942.2,350.6 959.4,369.2 977.7,390.3 996,411.5" fill="#6b6b6b"/><path d="M291,0 L320,219 M599,0 L586,201 M1024,205 L974,345 L791,411" stroke="#34346a" stroke-width="1" fill="none"/><path d="M320,219 L586,201 M586,201 L974,345" stroke="#5a5a96" stroke-width="0.8" stroke-dasharray="6 5" fill="none" opacity="0.7"/><path d="M240.7,301.2 L214,332.5 M240.7,301.2 L261,277.5 M244,341.9 L213,386.3 M297,265.7 L307.9,250 M610,426.7 L421.6,482.4 M610,426.7 L750.2,385.3 M260.3,382.2 L239,421.8 M333.5,246 L338.1,237.5 M400.9,442.3 L318.3,463.8 M730.2,356.7 L771.8,345.9 M294.4,409.5 L279.7,448.5 M360.2,235.3 L362.5,229.2 M324.8,423.7 L261.4,438.4 M744.8,326.2 L773.3,319.6 M339.1,428.6 L330.6,467.5 M382.8,228.1 L383.9,223.2 M282.1,401.7 L229.8,412.6 M745.1,304.6 L767.5,299.9 M390.2,440.7 L387.9,479.1 M403,222.8 L403.2,218.7 M258.4,379.9 L213.9,388.4 M739.4,287.9 L758.3,284.3 M444.5,446.2 L448.3,483.5 M421.6,218.8 L421.2,215.1 M247.1,359.5 L208.3,366.3 M730.6,274.5 L747.1,271.6 M499,445.7 L508.3,481.4 M439.2,215.6 L438.3,212.3 M244,340.8 L209.6,346.3 M719.9,263.4 L734.9,261 M551.2,440 L565.3,473.6 M456,213.2 L454.7,210.1 M246.6,323.8 L215.8,328.5 M708,254.1 L721.9,252 M599,429.8 L617,461.1 M472.5,211.4 L470.7,208.4 M253.4,308.5 L225.3,312.4 M695.3,246 L708.5,244.2 M640.9,416.2 L662.1,444.9 M488.7,210.1 L486.5,207.1 M263.3,294.6 L237.4,298.1 M681.9,239.1 L694.5,237.4 M676.2,400 L699.6,426.1 M505,209.3 L502.3,206.3 M275.6,282.1 L251.4,285.1 M667.8,233 L680.2,231.5 M704.4,381.9 L729.4,405.5 M521.5,209 L518.3,206 M289.8,270.6 L266.9,273.3 M653,227.7 L665.4,226.2 M725.3,362.6 L751.3,384 M538.6,209.2 L534.8,206 M305.9,260.2 L283.8,262.7 M637.4,223 L649.9,221.6 M739.1,342.6 L765.8,362 M556.7,210.1 L551.9,206.6 M323.7,250.6 L302,252.9 M620.7,218.9 L633.6,217.6 M745.6,322 L773,339.9 M576.3,211.8 L570.3,207.9 M343.5,241.7 L321.8,243.9 M602.3,215.4 L616.2,214 M744.3,300.7 L773,317.6 M598.6,214.8 L590.6,210 M366.2,233.3 L343.4,235.5 M581.6,212.4 L597.1,210.9 M733,277.7 L765.1,295 M626.6,220.3 L614.2,213.6 M393.5,225.2 L368.1,227.6 M556.4,210.1 L575.2,208.3 M686.8,241 L745.6,270.1 M686.8,241 L645.6,220.5 M433,216.7 L398.2,219.8 M519.2,209 L547.9,206.4 M475.1,208.6 L447.8,210.9 M475.1,208.6 L501.2,206.4" stroke="#56569c" stroke-width="1" stroke-dasharray="5 4" fill="none" opacity="0.8"/><polygon points="312.7,411.5 306.4,408.3 300,405.2 292.8,400.4 283.6,393.2 273.5,384.3 264.9,374.5 258.8,363.4 254.3,351.5 251,340.6 248.4,332.5 247,325.5 248.2,316.7 252.1,304.3 258.5,290.2 268.9,276.9 284.6,265.3 304.2,254.6 324.7,245 345.8,236.4 367.8,228.8 388.4,223 406.8,219.5 423.8,217.6 440,216.3 454.8,215.1 468.7,214.4 484,213.9 502.2,213.5 521.6,213.2 539.8,213 555.2,212.6 569.2,212.3 583.7,213.1 599.8,215.5 616.3,219 631.5,223 644.2,227.1 655.5,231.7 667.3,237 680.6,243 694.3,249.7 707.2,257 718.8,265.2 729.4,274 739,282.8 747.8,291.2 755.5,299.6 761,308.7 763.8,319.6 764.4,331.2 763.7,340.6 762.1,345.4 759.2,347.9 755,352.5 750.2,361.2 744.1,371.8 735,382.4 721.2,392.2 704.2,401.8 687.3,411.5" fill="#101010"/><path d="M164,345.7 L233.1,277.7 M150.5,406.6 L284.4,250.2 M402.5,548.8 L798.6,413.2 M168.3,450.5 L316.9,237.2 M279.1,524.5 L816.2,365.8 M204.7,485.7 L342.8,228.6 M212.1,491.4 L814.4,334.8 M255.3,513.1 L365.1,222.4 M175.9,458.2 L805.7,312 M316.5,532.2 L385.1,217.6 M158.6,427.6 L794.2,294.3 M384.2,542.9 L403.5,213.7 M153.2,400 L781.2,279.9 M454.5,545.3 L420.8,210.7 M155.5,375.5 L767.5,268 M523.6,540 L437.2,208.2 M163.1,353.9 L753.5,258 M588.2,528.3 L453.1,206.3 M174.1,334.8 L739.3,249.3 M646.2,511.3 L468.6,204.7 M187.5,317.8 L724.9,241.9 M695.8,490.5 L483.9,203.6 M202.6,302.7 L710.4,235.3 M736.6,467.2 L499.1,202.7 M219,289.1 L695.7,229.5 M768.4,442.5 L514.5,202.3 M236.3,277 L680.8,224.4 M791.6,417.1 L530.1,202.2 M254.4,266 L665.5,219.9 M806.7,391.8 L546.3,202.6 M273.4,255.9 L649.7,215.8 M814.5,366.9 L563.4,203.4 M293.3,246.8 L633.2,212.3 M815.3,342.6 L581.7,204.8 M314.3,238.3 L615.6,209.1 M809.3,318.8 L602,207 M337,230.4 L596.4,206.3 M795.7,295 L625.9,210.7 M362.4,223 L574.5,204.1 M771.1,269.6 L657.6,217.4 M392.9,215.6 L547.5,202.4 M440.8,207.4 L503,202.3" stroke="#4a4a8a" stroke-width="0.9" fill="none" clip-path="url(#incl)"/><polyline points="457.8,174.9 535.7,172.6 583.7,187.2" fill="none" stroke="#e01818" stroke-width="1"/><polyline points="457.8,174.9 459.3,240.7 478.2,287.9" fill="none" stroke="#e01818" stroke-width="1"/><polygon points="535.7,172.6 583.7,187.2 573.4,189.1 538,182.5" fill="#8e8e8e" /><polygon points="460.9,218.7 475.1,243.1 475.1,276.9 460.6,241.5" fill="#8a8a8a" /><polygon points="460.9,218.7 482.9,217.9 502.9,241.5 475.1,243.1" fill="#a0a0a0" /><polygon points="538,182.2 573.4,189.1 537.2,212.7" fill="#8c8c8c" /><polygon points="482.9,217.9 514.4,194.8 538,182.2 537.2,212.7 502.9,241" fill="#ffffff" /><polygon points="475.1,243.1 502.9,241.5 573.4,189.1 572.3,265.9 561.6,269.3 492.4,278.8 475.1,277.2" fill="#ffffff" /><polyline points="502.9,241.5 573.4,189.1" fill="none" stroke="#b4b4b4" stroke-width="1.5"/><ellipse cx="485.8" cy="276.9" rx="6.5" ry="3" fill="#d8d8d8"/><rect x="479.3" y="276.9" width="13" height="8" fill="#f4f4f4"/><ellipse cx="485.8" cy="284.8" rx="6.5" ry="2.5" fill="#f4f4f4"/><ellipse cx="569.2" cy="265.9" rx="7" ry="3" fill="#d4d4d4"/><rect x="562.3" y="265.9" width="14" height="7" fill="#f0f0f0"/><ellipse cx="569.2" cy="273" rx="7" ry="2.5" fill="#f0f0f0"/><polyline points="478.2,192.7 478.2,287.9 578.9,274.5 583.7,187.2" fill="none" stroke="#e01818" stroke-width="1"/><polyline points="457.8,175.4 478.2,192.7" fill="none" stroke="#1515e0" stroke-width="3"/><polyline points="478.2,192.7 583.7,187.2" fill="none" stroke="#22ee22" stroke-width="3"/><polyline points="464.8,162.8 471.9,169.9 479.5,162.3" fill="none" stroke="#1515e0" stroke-width="2.6"/><polyline points="471.9,169.9 471.9,179.3" fill="none" stroke="#1515e0" stroke-width="2.6"/><polyline points="535.7,169.9 545.9,185.6" fill="none" stroke="#22ee22" stroke-width="2.4"/><polyline points="546.7,169.6 534.9,185.9" fill="none" stroke="#22ee22" stroke-width="2.4"/></svg>
</div>
</body>
</html>
